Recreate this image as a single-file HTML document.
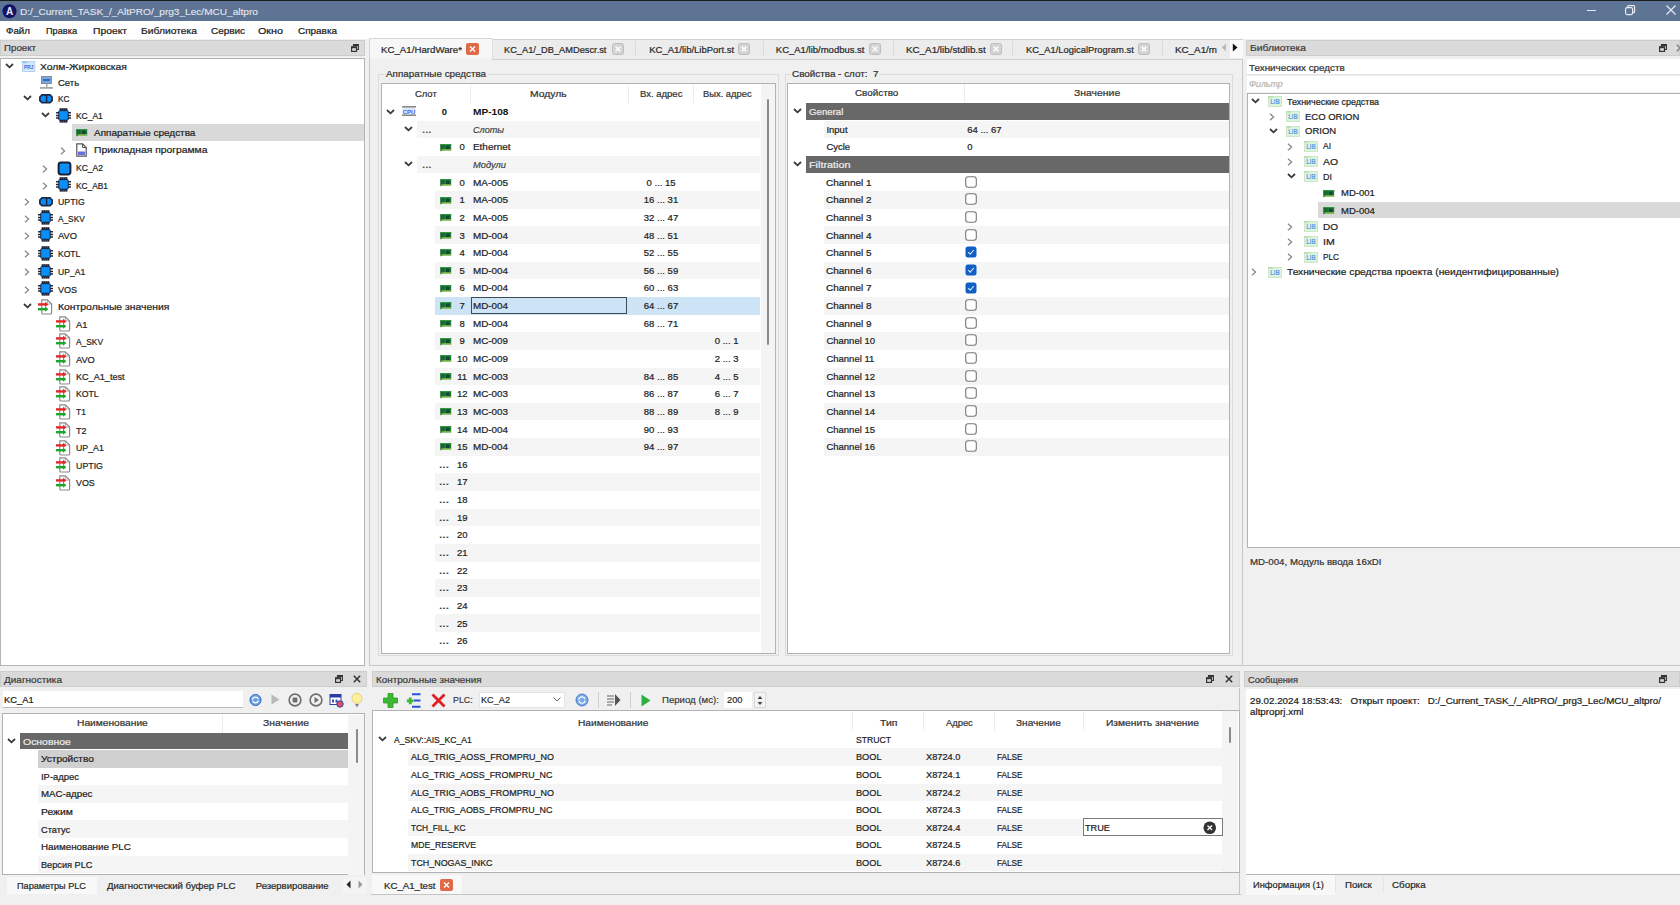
<!DOCTYPE html><html><head><meta charset="utf-8"><title>AltPRO</title><style>
*{margin:0;padding:0;box-sizing:border-box}
html,body{width:1680px;height:905px;overflow:hidden;background:#f0f0f0;font-family:"Liberation Sans",sans-serif;font-size:10px;color:#222}
div{position:absolute}
.t{white-space:pre;transform-origin:0 0}
svg{position:absolute;overflow:visible}
</style></head><body>
<div style="left:0;top:0;width:1680px;height:905px;overflow:hidden"><div style="left:0px;top:0px;width:1680px;height:1px;background:#1c1c1c"></div>
<div style="left:0px;top:1px;width:1680px;height:20.2px;background:#5e7495"></div>
<svg style="left:2px;top:4px" width="15" height="15"><circle cx="7.5" cy="7.3" r="7" fill="#12126a"/><text x="7.5" y="11.2" text-anchor="middle" font-family="Liberation Sans" font-weight="bold" font-size="10" fill="#e8e8f0">A</text></svg>
<div class="t" style="left:20.00px;top:7.05px;line-height:10.92px;font-size:9.5px;color:#e4e8ee;-webkit-text-stroke:0.1px #e4e8ee;transform:scaleX(1.061);">D:/_Current_TASK_/_AltPRO/_prg3_Lec/MCU_altpro</div>
<div style="left:1587px;top:10px;width:9px;height:1px;background:#e8ecf2"></div>
<svg style="left:1625px;top:5px" width="11" height="11"><rect x="0.6" y="2.6" width="7" height="7" rx="1.5" fill="none" stroke="#e8ecf2" stroke-width="1.2"/><path d="M2.6 2.6 V1.6 Q2.6 0.6 3.6 0.6 H8.6 Q9.6 0.6 9.6 1.6 V6.6 Q9.6 7.6 8.6 7.6 H7.6" fill="none" stroke="#e8ecf2" stroke-width="1.2"/></svg>
<svg style="left:1666px;top:5px" width="10" height="10"><path d="M0.5 0.5 L9.5 9.5 M9.5 0.5 L0.5 9.5" stroke="#e8ecf2" stroke-width="1.2"/></svg>
<div style="left:0px;top:21.2px;width:1680px;height:18px;background:#ffffff"></div>
<div class="t" style="left:6.00px;top:25.75px;line-height:10.92px;font-size:9.5px;color:#1a1a1a;-webkit-text-stroke:0.22px #1a1a1a;transform:scaleX(1.027);">Файл</div>
<div class="t" style="left:46.00px;top:25.75px;line-height:10.92px;font-size:9.5px;color:#1a1a1a;-webkit-text-stroke:0.22px #1a1a1a;transform:scaleX(0.966);">Правка</div>
<div class="t" style="left:93.00px;top:25.75px;line-height:10.92px;font-size:9.5px;color:#1a1a1a;-webkit-text-stroke:0.22px #1a1a1a;transform:scaleX(1.086);">Проект</div>
<div class="t" style="left:141.00px;top:25.75px;line-height:10.92px;font-size:9.5px;color:#1a1a1a;-webkit-text-stroke:0.22px #1a1a1a;transform:scaleX(1.084);">Библиотека</div>
<div class="t" style="left:211.00px;top:25.75px;line-height:10.92px;font-size:9.5px;color:#1a1a1a;-webkit-text-stroke:0.22px #1a1a1a;transform:scaleX(1.045);">Сервис</div>
<div class="t" style="left:258.00px;top:25.75px;line-height:10.92px;font-size:9.5px;color:#1a1a1a;-webkit-text-stroke:0.22px #1a1a1a;transform:scaleX(1.132);">Окно</div>
<div class="t" style="left:298.00px;top:25.75px;line-height:10.92px;font-size:9.5px;color:#1a1a1a;-webkit-text-stroke:0.22px #1a1a1a;transform:scaleX(1.046);">Справка</div>
<div style="left:0px;top:40px;width:365px;height:16px;background:#dadada;border:1px solid #cdcdcd"></div>
<div class="t" style="left:4.00px;top:43.05px;line-height:10.92px;font-size:9.5px;color:#3a3a3a;-webkit-text-stroke:0.22px #3a3a3a;transform:scaleX(1.022);">Проект</div>
<svg style="left:351px;top:44px" width="8" height="8"><path d="M2.5 2.5 V0.6 H7.4 V5.5 H5.5" fill="none" stroke="#333" stroke-width="1.1"/><path d="M2.5 1.3 H7.4" stroke="#333" stroke-width="1.4"/><rect x="0.6" y="2.8" width="4.9" height="4.6" fill="none" stroke="#333" stroke-width="1.2"/><path d="M0.6 3.5 H5.5" stroke="#333" stroke-width="1.4"/></svg>
<div style="left:0px;top:58px;width:365px;height:608px;background:#fff;border:1px solid #b4b4b4;border-top-color:#b2b2b2"></div>
<svg style="left:5px;top:62.900000000000006px" width="9" height="6" viewBox="0 0 9 6"><path d="M1 1 L4.5 4.3 L8 1" fill="none" stroke="#3a3a3a" stroke-width="1.8"/></svg>
<svg style="left:21.8px;top:60.900000000000006px" width="14" height="11" viewBox="0 0 14 11"><rect x="0.5" y="0.5" width="12.3" height="10" fill="#d4e8fa" stroke="#b4d4ee"/><rect x="0.5" y="0.5" width="4.5" height="1.4" fill="#90bde6"/><text x="6.7" y="8.2" text-anchor="middle" font-family="Liberation Sans" font-weight="bold" font-size="5.6" fill="#4a64d8" textLength="9.5" lengthAdjust="spacingAndGlyphs">PRJ</text></svg>
<div class="t" style="left:40.00px;top:61.65px;line-height:10.92px;font-size:9.5px;color:#1e1e1e;-webkit-text-stroke:0.22px #1e1e1e;transform:scaleX(1.088);">Холм-Жирковская</div>
<svg style="left:40px;top:75.5px" width="13" height="13" viewBox="0 0 13 13"><rect x="1.5" y="0.5" width="10" height="7" fill="#7aa6dc" stroke="#8090a0"/><rect x="3" y="3" width="7" height="2" fill="#3a6ab0"/><rect x="6" y="8" width="1.5" height="3" fill="#aaa"/><rect x="0" y="11" width="13" height="1.8" fill="#a8a8a8"/></svg>
<div class="t" style="left:58.00px;top:78.25px;line-height:10.92px;font-size:9.5px;color:#1e1e1e;-webkit-text-stroke:0.22px #1e1e1e;">Сеть</div>
<svg style="left:23px;top:95.0px" width="9" height="6" viewBox="0 0 9 6"><path d="M1 1 L4.5 4.3 L8 1" fill="none" stroke="#3a3a3a" stroke-width="1.8"/></svg>
<svg style="left:39.2px;top:93.9px" width="14" height="10" viewBox="0 0 14 10"><path d="M3 0.9 H11 L13.1 3 V6.6 L11 8.7 H3 L0.9 6.6 V3 Z" fill="#0c8cf6" stroke="#1b2a48" stroke-width="1.7"/><path d="M7.6 1 V8.6" stroke="#1b2a48" stroke-width="1.5"/></svg>
<div class="t" style="left:58.00px;top:93.75px;line-height:10.92px;font-size:9.5px;color:#1e1e1e;-webkit-text-stroke:0.22px #1e1e1e;transform:scaleX(0.871);">KC</div>
<svg style="left:41px;top:112.2px" width="9" height="6" viewBox="0 0 9 6"><path d="M1 1 L4.5 4.3 L8 1" fill="none" stroke="#3a3a3a" stroke-width="1.8"/></svg>
<svg style="left:56px;top:107.60000000000001px" width="15" height="15" viewBox="0 0 15 15"><rect x="2.8" y="2.6" width="9.4" height="9.6" rx="0.8" fill="#0a8ef8" stroke="#1a2a48" stroke-width="1"/><rect x="0" y="3.95" width="3" height="1.5" rx="0.5" fill="#1a2233"/><rect x="12" y="3.95" width="3" height="1.5" rx="0.5" fill="#1a2233"/><rect x="0" y="6.65" width="3" height="1.5" rx="0.5" fill="#1a2233"/><rect x="12" y="6.65" width="3" height="1.5" rx="0.5" fill="#1a2233"/><rect x="0" y="9.35" width="3" height="1.5" rx="0.5" fill="#1a2233"/><rect x="12" y="9.35" width="3" height="1.5" rx="0.5" fill="#1a2233"/><rect x="3.6" y="0.2" width="7.8" height="2.4" fill="#1a2233"/><rect x="3.6" y="12.2" width="7.8" height="2.4" fill="#1a2233"/><path d="M5.6 0.2 V1.8 M7.5 0.2 V1.8 M9.4 0.2 V1.8 M5.6 13 V14.6 M7.5 13 V14.6 M9.4 13 V14.6" stroke="#8090a8" stroke-width="0.45"/></svg>
<div class="t" style="left:76.00px;top:110.95px;line-height:10.92px;font-size:9.5px;color:#1e1e1e;-webkit-text-stroke:0.22px #1e1e1e;transform:scaleX(0.887);">KC_A1</div>
<div style="left:72px;top:124.1px;width:292px;height:16.6px;background:#d9d9d9"></div>
<svg style="left:76px;top:129.3px" width="12" height="8" viewBox="0 0 12 8"><path d="M0.3 0 H11.2 V6.4 H2 L0.3 7.4 Z" fill="#1f7f36"/><rect x="0.3" y="0" width="10.9" height="0.9" fill="#2e9a48"/><rect x="6" y="1.6" width="3.6" height="3.4" fill="#14463c"/><rect x="2.2" y="5.4" width="9" height="1" fill="#a8cc48"/><path d="M0.3 2 H4.6 M0.3 4 H4.6" stroke="#0f5424" stroke-width="0.9"/></svg>
<div class="t" style="left:94.00px;top:128.05px;line-height:10.92px;font-size:9.5px;color:#1e1e1e;-webkit-text-stroke:0.22px #1e1e1e;transform:scaleX(1.050);">Аппаратные средства</div>
<svg style="left:60px;top:146.7px" width="6" height="8" viewBox="0 0 6 8"><path d="M1 0.8 L4.6 4 L1 7.2" fill="none" stroke="#8a8a8a" stroke-width="1.3"/></svg>
<svg style="left:76px;top:143.0px" width="11" height="14" viewBox="0 0 11 14"><path d="M0.8 0.8 H6.5 L10.2 4.5 V13.2 H0.8 Z" fill="#fff" stroke="#555" stroke-width="1.2"/><path d="M6.5 0.8 V4.5 H10.2" fill="none" stroke="#555" stroke-width="1"/><rect x="2" y="8.5" width="7" height="3.5" fill="#6a70e0"/></svg>
<div class="t" style="left:94.00px;top:145.45px;line-height:10.92px;font-size:9.5px;color:#1e1e1e;-webkit-text-stroke:0.22px #1e1e1e;transform:scaleX(1.086);">Прикладная программа</div>
<svg style="left:42px;top:164.6px" width="6" height="8" viewBox="0 0 6 8"><path d="M1 0.8 L4.6 4 L1 7.2" fill="none" stroke="#8a8a8a" stroke-width="1.3"/></svg>
<svg style="left:56.5px;top:160.5px" width="15" height="15" viewBox="0 0 15 15"><rect x="1.6" y="1.6" width="11.8" height="11.8" rx="2.4" fill="#0a8ef8" stroke="#1a2233" stroke-width="2"/></svg>
<div class="t" style="left:76.00px;top:163.35px;line-height:10.92px;font-size:9.5px;color:#1e1e1e;-webkit-text-stroke:0.22px #1e1e1e;transform:scaleX(0.897);">KC_A2</div>
<svg style="left:42px;top:181.8px" width="6" height="8" viewBox="0 0 6 8"><path d="M1 0.8 L4.6 4 L1 7.2" fill="none" stroke="#8a8a8a" stroke-width="1.3"/></svg>
<svg style="left:56px;top:177.20000000000002px" width="15" height="15" viewBox="0 0 15 15"><rect x="2.8" y="2.6" width="9.4" height="9.6" rx="0.8" fill="#0a8ef8" stroke="#1a2a48" stroke-width="1"/><rect x="0" y="3.95" width="3" height="1.5" rx="0.5" fill="#1a2233"/><rect x="12" y="3.95" width="3" height="1.5" rx="0.5" fill="#1a2233"/><rect x="0" y="6.65" width="3" height="1.5" rx="0.5" fill="#1a2233"/><rect x="12" y="6.65" width="3" height="1.5" rx="0.5" fill="#1a2233"/><rect x="0" y="9.35" width="3" height="1.5" rx="0.5" fill="#1a2233"/><rect x="12" y="9.35" width="3" height="1.5" rx="0.5" fill="#1a2233"/><rect x="3.6" y="0.2" width="7.8" height="2.4" fill="#1a2233"/><rect x="3.6" y="12.2" width="7.8" height="2.4" fill="#1a2233"/><path d="M5.6 0.2 V1.8 M7.5 0.2 V1.8 M9.4 0.2 V1.8 M5.6 13 V14.6 M7.5 13 V14.6 M9.4 13 V14.6" stroke="#8090a8" stroke-width="0.45"/></svg>
<div class="t" style="left:76.00px;top:180.55px;line-height:10.92px;font-size:9.5px;color:#1e1e1e;-webkit-text-stroke:0.22px #1e1e1e;transform:scaleX(0.878);">KC_AB1</div>
<svg style="left:24px;top:197.8px" width="6" height="8" viewBox="0 0 6 8"><path d="M1 0.8 L4.6 4 L1 7.2" fill="none" stroke="#8a8a8a" stroke-width="1.3"/></svg>
<svg style="left:39.2px;top:196.70000000000002px" width="14" height="10" viewBox="0 0 14 10"><path d="M3 0.9 H11 L13.1 3 V6.6 L11 8.7 H3 L0.9 6.6 V3 Z" fill="#0c8cf6" stroke="#1b2a48" stroke-width="1.7"/><path d="M7.6 1 V8.6" stroke="#1b2a48" stroke-width="1.5"/></svg>
<div class="t" style="left:58.00px;top:196.55px;line-height:10.92px;font-size:9.5px;color:#1e1e1e;-webkit-text-stroke:0.22px #1e1e1e;transform:scaleX(0.920);">UPTIG</div>
<svg style="left:24px;top:214.9px" width="6" height="8" viewBox="0 0 6 8"><path d="M1 0.8 L4.6 4 L1 7.2" fill="none" stroke="#8a8a8a" stroke-width="1.3"/></svg>
<svg style="left:38px;top:210.3px" width="15" height="15" viewBox="0 0 15 15"><rect x="2.8" y="2.6" width="9.4" height="9.6" rx="0.8" fill="#0a8ef8" stroke="#1a2a48" stroke-width="1"/><rect x="0" y="3.95" width="3" height="1.5" rx="0.5" fill="#1a2233"/><rect x="12" y="3.95" width="3" height="1.5" rx="0.5" fill="#1a2233"/><rect x="0" y="6.65" width="3" height="1.5" rx="0.5" fill="#1a2233"/><rect x="12" y="6.65" width="3" height="1.5" rx="0.5" fill="#1a2233"/><rect x="0" y="9.35" width="3" height="1.5" rx="0.5" fill="#1a2233"/><rect x="12" y="9.35" width="3" height="1.5" rx="0.5" fill="#1a2233"/><rect x="3.6" y="0.2" width="7.8" height="2.4" fill="#1a2233"/><rect x="3.6" y="12.2" width="7.8" height="2.4" fill="#1a2233"/><path d="M5.6 0.2 V1.8 M7.5 0.2 V1.8 M9.4 0.2 V1.8 M5.6 13 V14.6 M7.5 13 V14.6 M9.4 13 V14.6" stroke="#8090a8" stroke-width="0.45"/></svg>
<div class="t" style="left:58.00px;top:213.65px;line-height:10.92px;font-size:9.5px;color:#1e1e1e;-webkit-text-stroke:0.22px #1e1e1e;transform:scaleX(0.871);">A_SKV</div>
<svg style="left:24px;top:232.0px" width="6" height="8" viewBox="0 0 6 8"><path d="M1 0.8 L4.6 4 L1 7.2" fill="none" stroke="#8a8a8a" stroke-width="1.3"/></svg>
<svg style="left:38px;top:227.4px" width="15" height="15" viewBox="0 0 15 15"><rect x="2.8" y="2.6" width="9.4" height="9.6" rx="0.8" fill="#0a8ef8" stroke="#1a2a48" stroke-width="1"/><rect x="0" y="3.95" width="3" height="1.5" rx="0.5" fill="#1a2233"/><rect x="12" y="3.95" width="3" height="1.5" rx="0.5" fill="#1a2233"/><rect x="0" y="6.65" width="3" height="1.5" rx="0.5" fill="#1a2233"/><rect x="12" y="6.65" width="3" height="1.5" rx="0.5" fill="#1a2233"/><rect x="0" y="9.35" width="3" height="1.5" rx="0.5" fill="#1a2233"/><rect x="12" y="9.35" width="3" height="1.5" rx="0.5" fill="#1a2233"/><rect x="3.6" y="0.2" width="7.8" height="2.4" fill="#1a2233"/><rect x="3.6" y="12.2" width="7.8" height="2.4" fill="#1a2233"/><path d="M5.6 0.2 V1.8 M7.5 0.2 V1.8 M9.4 0.2 V1.8 M5.6 13 V14.6 M7.5 13 V14.6 M9.4 13 V14.6" stroke="#8090a8" stroke-width="0.45"/></svg>
<div class="t" style="left:58.00px;top:230.75px;line-height:10.92px;font-size:9.5px;color:#1e1e1e;-webkit-text-stroke:0.22px #1e1e1e;transform:scaleX(0.981);">AVO</div>
<svg style="left:24px;top:250.39999999999998px" width="6" height="8" viewBox="0 0 6 8"><path d="M1 0.8 L4.6 4 L1 7.2" fill="none" stroke="#8a8a8a" stroke-width="1.3"/></svg>
<svg style="left:38px;top:245.79999999999998px" width="15" height="15" viewBox="0 0 15 15"><rect x="2.8" y="2.6" width="9.4" height="9.6" rx="0.8" fill="#0a8ef8" stroke="#1a2a48" stroke-width="1"/><rect x="0" y="3.95" width="3" height="1.5" rx="0.5" fill="#1a2233"/><rect x="12" y="3.95" width="3" height="1.5" rx="0.5" fill="#1a2233"/><rect x="0" y="6.65" width="3" height="1.5" rx="0.5" fill="#1a2233"/><rect x="12" y="6.65" width="3" height="1.5" rx="0.5" fill="#1a2233"/><rect x="0" y="9.35" width="3" height="1.5" rx="0.5" fill="#1a2233"/><rect x="12" y="9.35" width="3" height="1.5" rx="0.5" fill="#1a2233"/><rect x="3.6" y="0.2" width="7.8" height="2.4" fill="#1a2233"/><rect x="3.6" y="12.2" width="7.8" height="2.4" fill="#1a2233"/><path d="M5.6 0.2 V1.8 M7.5 0.2 V1.8 M9.4 0.2 V1.8 M5.6 13 V14.6 M7.5 13 V14.6 M9.4 13 V14.6" stroke="#8090a8" stroke-width="0.45"/></svg>
<div class="t" style="left:58.00px;top:249.15px;line-height:10.92px;font-size:9.5px;color:#1e1e1e;-webkit-text-stroke:0.22px #1e1e1e;transform:scaleX(0.899);">KOTL</div>
<svg style="left:24px;top:268.3px" width="6" height="8" viewBox="0 0 6 8"><path d="M1 0.8 L4.6 4 L1 7.2" fill="none" stroke="#8a8a8a" stroke-width="1.3"/></svg>
<svg style="left:38px;top:263.7px" width="15" height="15" viewBox="0 0 15 15"><rect x="2.8" y="2.6" width="9.4" height="9.6" rx="0.8" fill="#0a8ef8" stroke="#1a2a48" stroke-width="1"/><rect x="0" y="3.95" width="3" height="1.5" rx="0.5" fill="#1a2233"/><rect x="12" y="3.95" width="3" height="1.5" rx="0.5" fill="#1a2233"/><rect x="0" y="6.65" width="3" height="1.5" rx="0.5" fill="#1a2233"/><rect x="12" y="6.65" width="3" height="1.5" rx="0.5" fill="#1a2233"/><rect x="0" y="9.35" width="3" height="1.5" rx="0.5" fill="#1a2233"/><rect x="12" y="9.35" width="3" height="1.5" rx="0.5" fill="#1a2233"/><rect x="3.6" y="0.2" width="7.8" height="2.4" fill="#1a2233"/><rect x="3.6" y="12.2" width="7.8" height="2.4" fill="#1a2233"/><path d="M5.6 0.2 V1.8 M7.5 0.2 V1.8 M9.4 0.2 V1.8 M5.6 13 V14.6 M7.5 13 V14.6 M9.4 13 V14.6" stroke="#8090a8" stroke-width="0.45"/></svg>
<div class="t" style="left:58.00px;top:267.05px;line-height:10.92px;font-size:9.5px;color:#1e1e1e;-webkit-text-stroke:0.22px #1e1e1e;transform:scaleX(0.907);">UP_A1</div>
<svg style="left:24px;top:285.9px" width="6" height="8" viewBox="0 0 6 8"><path d="M1 0.8 L4.6 4 L1 7.2" fill="none" stroke="#8a8a8a" stroke-width="1.3"/></svg>
<svg style="left:38px;top:281.29999999999995px" width="15" height="15" viewBox="0 0 15 15"><rect x="2.8" y="2.6" width="9.4" height="9.6" rx="0.8" fill="#0a8ef8" stroke="#1a2a48" stroke-width="1"/><rect x="0" y="3.95" width="3" height="1.5" rx="0.5" fill="#1a2233"/><rect x="12" y="3.95" width="3" height="1.5" rx="0.5" fill="#1a2233"/><rect x="0" y="6.65" width="3" height="1.5" rx="0.5" fill="#1a2233"/><rect x="12" y="6.65" width="3" height="1.5" rx="0.5" fill="#1a2233"/><rect x="0" y="9.35" width="3" height="1.5" rx="0.5" fill="#1a2233"/><rect x="12" y="9.35" width="3" height="1.5" rx="0.5" fill="#1a2233"/><rect x="3.6" y="0.2" width="7.8" height="2.4" fill="#1a2233"/><rect x="3.6" y="12.2" width="7.8" height="2.4" fill="#1a2233"/><path d="M5.6 0.2 V1.8 M7.5 0.2 V1.8 M9.4 0.2 V1.8 M5.6 13 V14.6 M7.5 13 V14.6 M9.4 13 V14.6" stroke="#8090a8" stroke-width="0.45"/></svg>
<div class="t" style="left:58.00px;top:284.65px;line-height:10.92px;font-size:9.5px;color:#1e1e1e;-webkit-text-stroke:0.22px #1e1e1e;transform:scaleX(0.947);">VOS</div>
<svg style="left:23px;top:303.2px" width="9" height="6" viewBox="0 0 9 6"><path d="M1 1 L4.5 4.3 L8 1" fill="none" stroke="#3a3a3a" stroke-width="1.8"/></svg>
<svg style="left:38px;top:298.5px" width="15" height="16" viewBox="0 0 15 16"><path d="M3.8 0.8 H9.3 L13.6 5 V13.7 Q13.6 15 12.3 15 H5 Q3.8 15 3.8 13.7 Z" fill="#fff" stroke="#8a8a8a" stroke-width="1.2"/><path d="M9.3 0.8 V5 H13.6" fill="none" stroke="#9a9a9a" stroke-width="0.9"/><path d="M0 5.4 H7.5" stroke="#e42828" stroke-width="2.4"/><path d="M7 2.8 L10.4 5.4 L7 8 Z" fill="#e42828"/><path d="M0 10.2 H7.5" stroke="#1aa82a" stroke-width="2.4"/><path d="M7 7.6 L10.4 10.2 L7 12.8 Z" fill="#1aa82a"/></svg>
<div class="t" style="left:58.00px;top:301.95px;line-height:10.92px;font-size:9.5px;color:#1e1e1e;-webkit-text-stroke:0.22px #1e1e1e;transform:scaleX(1.094);">Контрольные значения</div>
<svg style="left:56px;top:316.40000000000003px" width="15" height="16" viewBox="0 0 15 16"><path d="M3.8 0.8 H9.3 L13.6 5 V13.7 Q13.6 15 12.3 15 H5 Q3.8 15 3.8 13.7 Z" fill="#fff" stroke="#8a8a8a" stroke-width="1.2"/><path d="M9.3 0.8 V5 H13.6" fill="none" stroke="#9a9a9a" stroke-width="0.9"/><path d="M0 5.4 H7.5" stroke="#e42828" stroke-width="2.4"/><path d="M7 2.8 L10.4 5.4 L7 8 Z" fill="#e42828"/><path d="M0 10.2 H7.5" stroke="#1aa82a" stroke-width="2.4"/><path d="M7 7.6 L10.4 10.2 L7 12.8 Z" fill="#1aa82a"/></svg>
<div class="t" style="left:76.00px;top:319.85px;line-height:10.92px;font-size:9.5px;color:#1e1e1e;-webkit-text-stroke:0.22px #1e1e1e;transform:scaleX(0.981);">A1</div>
<svg style="left:56px;top:333.3px" width="15" height="16" viewBox="0 0 15 16"><path d="M3.8 0.8 H9.3 L13.6 5 V13.7 Q13.6 15 12.3 15 H5 Q3.8 15 3.8 13.7 Z" fill="#fff" stroke="#8a8a8a" stroke-width="1.2"/><path d="M9.3 0.8 V5 H13.6" fill="none" stroke="#9a9a9a" stroke-width="0.9"/><path d="M0 5.4 H7.5" stroke="#e42828" stroke-width="2.4"/><path d="M7 2.8 L10.4 5.4 L7 8 Z" fill="#e42828"/><path d="M0 10.2 H7.5" stroke="#1aa82a" stroke-width="2.4"/><path d="M7 7.6 L10.4 10.2 L7 12.8 Z" fill="#1aa82a"/></svg>
<div class="t" style="left:76.00px;top:336.75px;line-height:10.92px;font-size:9.5px;color:#1e1e1e;-webkit-text-stroke:0.22px #1e1e1e;transform:scaleX(0.881);">A_SKV</div>
<svg style="left:56px;top:351.2px" width="15" height="16" viewBox="0 0 15 16"><path d="M3.8 0.8 H9.3 L13.6 5 V13.7 Q13.6 15 12.3 15 H5 Q3.8 15 3.8 13.7 Z" fill="#fff" stroke="#8a8a8a" stroke-width="1.2"/><path d="M9.3 0.8 V5 H13.6" fill="none" stroke="#9a9a9a" stroke-width="0.9"/><path d="M0 5.4 H7.5" stroke="#e42828" stroke-width="2.4"/><path d="M7 2.8 L10.4 5.4 L7 8 Z" fill="#e42828"/><path d="M0 10.2 H7.5" stroke="#1aa82a" stroke-width="2.4"/><path d="M7 7.6 L10.4 10.2 L7 12.8 Z" fill="#1aa82a"/></svg>
<div class="t" style="left:76.00px;top:354.65px;line-height:10.92px;font-size:9.5px;color:#1e1e1e;-webkit-text-stroke:0.22px #1e1e1e;transform:scaleX(0.971);">AVO</div>
<svg style="left:56px;top:368.7px" width="15" height="16" viewBox="0 0 15 16"><path d="M3.8 0.8 H9.3 L13.6 5 V13.7 Q13.6 15 12.3 15 H5 Q3.8 15 3.8 13.7 Z" fill="#fff" stroke="#8a8a8a" stroke-width="1.2"/><path d="M9.3 0.8 V5 H13.6" fill="none" stroke="#9a9a9a" stroke-width="0.9"/><path d="M0 5.4 H7.5" stroke="#e42828" stroke-width="2.4"/><path d="M7 2.8 L10.4 5.4 L7 8 Z" fill="#e42828"/><path d="M0 10.2 H7.5" stroke="#1aa82a" stroke-width="2.4"/><path d="M7 7.6 L10.4 10.2 L7 12.8 Z" fill="#1aa82a"/></svg>
<div class="t" style="left:76.00px;top:372.15px;line-height:10.92px;font-size:9.5px;color:#1e1e1e;-webkit-text-stroke:0.22px #1e1e1e;transform:scaleX(0.959);">KC_A1_test</div>
<svg style="left:56px;top:386.0px" width="15" height="16" viewBox="0 0 15 16"><path d="M3.8 0.8 H9.3 L13.6 5 V13.7 Q13.6 15 12.3 15 H5 Q3.8 15 3.8 13.7 Z" fill="#fff" stroke="#8a8a8a" stroke-width="1.2"/><path d="M9.3 0.8 V5 H13.6" fill="none" stroke="#9a9a9a" stroke-width="0.9"/><path d="M0 5.4 H7.5" stroke="#e42828" stroke-width="2.4"/><path d="M7 2.8 L10.4 5.4 L7 8 Z" fill="#e42828"/><path d="M0 10.2 H7.5" stroke="#1aa82a" stroke-width="2.4"/><path d="M7 7.6 L10.4 10.2 L7 12.8 Z" fill="#1aa82a"/></svg>
<div class="t" style="left:76.00px;top:389.45px;line-height:10.92px;font-size:9.5px;color:#1e1e1e;-webkit-text-stroke:0.22px #1e1e1e;transform:scaleX(0.911);">KOTL</div>
<svg style="left:56px;top:403.90000000000003px" width="15" height="16" viewBox="0 0 15 16"><path d="M3.8 0.8 H9.3 L13.6 5 V13.7 Q13.6 15 12.3 15 H5 Q3.8 15 3.8 13.7 Z" fill="#fff" stroke="#8a8a8a" stroke-width="1.2"/><path d="M9.3 0.8 V5 H13.6" fill="none" stroke="#9a9a9a" stroke-width="0.9"/><path d="M0 5.4 H7.5" stroke="#e42828" stroke-width="2.4"/><path d="M7 2.8 L10.4 5.4 L7 8 Z" fill="#e42828"/><path d="M0 10.2 H7.5" stroke="#1aa82a" stroke-width="2.4"/><path d="M7 7.6 L10.4 10.2 L7 12.8 Z" fill="#1aa82a"/></svg>
<div class="t" style="left:76.00px;top:407.35px;line-height:10.92px;font-size:9.5px;color:#1e1e1e;-webkit-text-stroke:0.22px #1e1e1e;transform:scaleX(0.892);">T1</div>
<svg style="left:56px;top:422.40000000000003px" width="15" height="16" viewBox="0 0 15 16"><path d="M3.8 0.8 H9.3 L13.6 5 V13.7 Q13.6 15 12.3 15 H5 Q3.8 15 3.8 13.7 Z" fill="#fff" stroke="#8a8a8a" stroke-width="1.2"/><path d="M9.3 0.8 V5 H13.6" fill="none" stroke="#9a9a9a" stroke-width="0.9"/><path d="M0 5.4 H7.5" stroke="#e42828" stroke-width="2.4"/><path d="M7 2.8 L10.4 5.4 L7 8 Z" fill="#e42828"/><path d="M0 10.2 H7.5" stroke="#1aa82a" stroke-width="2.4"/><path d="M7 7.6 L10.4 10.2 L7 12.8 Z" fill="#1aa82a"/></svg>
<div class="t" style="left:76.00px;top:425.85px;line-height:10.92px;font-size:9.5px;color:#1e1e1e;-webkit-text-stroke:0.22px #1e1e1e;transform:scaleX(0.946);">T2</div>
<svg style="left:56px;top:439.6px" width="15" height="16" viewBox="0 0 15 16"><path d="M3.8 0.8 H9.3 L13.6 5 V13.7 Q13.6 15 12.3 15 H5 Q3.8 15 3.8 13.7 Z" fill="#fff" stroke="#8a8a8a" stroke-width="1.2"/><path d="M9.3 0.8 V5 H13.6" fill="none" stroke="#9a9a9a" stroke-width="0.9"/><path d="M0 5.4 H7.5" stroke="#e42828" stroke-width="2.4"/><path d="M7 2.8 L10.4 5.4 L7 8 Z" fill="#e42828"/><path d="M0 10.2 H7.5" stroke="#1aa82a" stroke-width="2.4"/><path d="M7 7.6 L10.4 10.2 L7 12.8 Z" fill="#1aa82a"/></svg>
<div class="t" style="left:76.00px;top:443.05px;line-height:10.92px;font-size:9.5px;color:#1e1e1e;-webkit-text-stroke:0.22px #1e1e1e;transform:scaleX(0.923);">UP_A1</div>
<svg style="left:56px;top:457.3px" width="15" height="16" viewBox="0 0 15 16"><path d="M3.8 0.8 H9.3 L13.6 5 V13.7 Q13.6 15 12.3 15 H5 Q3.8 15 3.8 13.7 Z" fill="#fff" stroke="#8a8a8a" stroke-width="1.2"/><path d="M9.3 0.8 V5 H13.6" fill="none" stroke="#9a9a9a" stroke-width="0.9"/><path d="M0 5.4 H7.5" stroke="#e42828" stroke-width="2.4"/><path d="M7 2.8 L10.4 5.4 L7 8 Z" fill="#e42828"/><path d="M0 10.2 H7.5" stroke="#1aa82a" stroke-width="2.4"/><path d="M7 7.6 L10.4 10.2 L7 12.8 Z" fill="#1aa82a"/></svg>
<div class="t" style="left:76.00px;top:460.75px;line-height:10.92px;font-size:9.5px;color:#1e1e1e;-webkit-text-stroke:0.22px #1e1e1e;transform:scaleX(0.930);">UPTIG</div>
<svg style="left:56px;top:474.5px" width="15" height="16" viewBox="0 0 15 16"><path d="M3.8 0.8 H9.3 L13.6 5 V13.7 Q13.6 15 12.3 15 H5 Q3.8 15 3.8 13.7 Z" fill="#fff" stroke="#8a8a8a" stroke-width="1.2"/><path d="M9.3 0.8 V5 H13.6" fill="none" stroke="#9a9a9a" stroke-width="0.9"/><path d="M0 5.4 H7.5" stroke="#e42828" stroke-width="2.4"/><path d="M7 2.8 L10.4 5.4 L7 8 Z" fill="#e42828"/><path d="M0 10.2 H7.5" stroke="#1aa82a" stroke-width="2.4"/><path d="M7 7.6 L10.4 10.2 L7 12.8 Z" fill="#1aa82a"/></svg>
<div class="t" style="left:76.00px;top:477.95px;line-height:10.92px;font-size:9.5px;color:#1e1e1e;-webkit-text-stroke:0.22px #1e1e1e;transform:scaleX(0.937);">VOS</div>
<div style="left:369px;top:38.5px;width:874px;height:20px;background:#ececec;border-top:1px solid #cfcfcf"></div>
<div style="left:368.75px;top:38px;width:123.75px;height:21px;background:#f7f7f7;border-top:1px solid #d6d6d6;border-left:1px solid #d6d6d6;border-right:1px solid #e0e0e0"></div>
<div class="t" style="left:381.25px;top:45.45px;line-height:10.92px;font-size:9.5px;color:#2a2a2a;-webkit-text-stroke:0.22px #2a2a2a;transform:scaleX(1.020);">KC_A1/HardWare*</div>
<svg style="left:466.25px;top:42.7px" width="13" height="12" viewBox="0 0 13 12"><rect x="0" y="0" width="13" height="12" rx="2" fill="#e06a48"/><path d="M4 3.5 L9 8.5 M9 3.5 L4 8.5" stroke="#fff" stroke-width="1.4"/></svg>
<div class="t" style="left:504.20px;top:45.45px;line-height:10.92px;font-size:9.5px;color:#2a2a2a;-webkit-text-stroke:0.22px #2a2a2a;transform:scaleX(0.975);">KC_A1/_DB_AMDescr.st</div>
<svg style="left:611.7px;top:42.5px" width="12" height="12" viewBox="0 0 12 12"><rect x="0.5" y="0.5" width="11" height="11" rx="2" fill="#d4d4d4" stroke="#bdbdbd"/><path d="M3.6 3.6 L8.4 8.4 M8.4 3.6 L3.6 8.4" stroke="#fafafa" stroke-width="1.5"/></svg>
<div style="left:635px;top:41px;width:1px;height:15px;background:#dadada"></div>
<div class="t" style="left:649.20px;top:45.45px;line-height:10.92px;font-size:9.5px;color:#2a2a2a;-webkit-text-stroke:0.22px #2a2a2a;">KC_A1/lib/LibPort.st</div>
<svg style="left:738.3px;top:42.5px" width="12" height="12" viewBox="0 0 12 12"><rect x="0.5" y="0.5" width="11" height="11" rx="2" fill="#d4d4d4" stroke="#bdbdbd"/><path d="M3.6 3.6 L8.4 8.4 M8.4 3.6 L3.6 8.4" stroke="#fafafa" stroke-width="1.5"/></svg>
<div style="left:762.5px;top:41px;width:1px;height:15px;background:#dadada"></div>
<div class="t" style="left:775.80px;top:45.45px;line-height:10.92px;font-size:9.5px;color:#2a2a2a;-webkit-text-stroke:0.22px #2a2a2a;">KC_A1/lib/modbus.st</div>
<svg style="left:869.2px;top:42.5px" width="12" height="12" viewBox="0 0 12 12"><rect x="0.5" y="0.5" width="11" height="11" rx="2" fill="#d4d4d4" stroke="#bdbdbd"/><path d="M3.6 3.6 L8.4 8.4 M8.4 3.6 L3.6 8.4" stroke="#fafafa" stroke-width="1.5"/></svg>
<div style="left:893.3px;top:41px;width:1px;height:15px;background:#dadada"></div>
<div class="t" style="left:905.90px;top:45.45px;line-height:10.92px;font-size:9.5px;color:#2a2a2a;-webkit-text-stroke:0.22px #2a2a2a;transform:scaleX(1.034);">KC_A1/lib/stdlib.st</div>
<svg style="left:989.8px;top:42.5px" width="12" height="12" viewBox="0 0 12 12"><rect x="0.5" y="0.5" width="11" height="11" rx="2" fill="#d4d4d4" stroke="#bdbdbd"/><path d="M3.6 3.6 L8.4 8.4 M8.4 3.6 L3.6 8.4" stroke="#fafafa" stroke-width="1.5"/></svg>
<div style="left:1012.2px;top:41px;width:1px;height:15px;background:#dadada"></div>
<div class="t" style="left:1026.20px;top:45.45px;line-height:10.92px;font-size:9.5px;color:#2a2a2a;-webkit-text-stroke:0.22px #2a2a2a;transform:scaleX(0.986);">KC_A1/LogicalProgram.st</div>
<svg style="left:1138px;top:42.5px" width="12" height="12" viewBox="0 0 12 12"><rect x="0.5" y="0.5" width="11" height="11" rx="2" fill="#d4d4d4" stroke="#bdbdbd"/><path d="M3.6 3.6 L8.4 8.4 M8.4 3.6 L3.6 8.4" stroke="#fafafa" stroke-width="1.5"/></svg>
<div style="left:1162px;top:41px;width:1px;height:15px;background:#dadada"></div>
<div class="t" style="left:1174.50px;top:45.45px;line-height:10.92px;font-size:9.5px;color:#2a2a2a;-webkit-text-stroke:0.22px #2a2a2a;transform:scaleX(1.033);overflow:hidden;">KC_A1/m</div>
<div style="left:1217px;top:39.5px;width:25.5px;height:19px;background:#ececec"></div>
<svg style="left:1221px;top:43px" width="6" height="9" viewBox="0 0 6 9"><path d="M5 0.5 L0.8 4.5 L5 8.5 Z" fill="#b8b8b8"/></svg>
<div style="left:1230px;top:39.5px;width:13px;height:18px;background:#fafafa"></div>
<svg style="left:1232px;top:43px" width="6" height="9" viewBox="0 0 6 9"><path d="M0.8 0.5 L5.5 4.5 L0.8 8.5 Z" fill="#111"/></svg>
<div style="left:369px;top:58.5px;width:873.5px;height:607px;background:#f0f0f0;border:1px solid #c8c8c8;border-top-color:#d0d0d0"></div>
<div style="left:369.8px;top:58px;width:122px;height:1.6px;background:#f3f3f3"></div>
<div style="left:377.5px;top:73.5px;width:401px;height:582.5px;border:1px solid #dcdcdc"></div>
<div style="left:784.6px;top:73.5px;width:448px;height:582.5px;border:1px solid #dcdcdc"></div>
<div class="t" style="left:385.00px;top:69.05px;line-height:10.92px;font-size:9.5px;color:#333;-webkit-text-stroke:0.22px #333;transform:scaleX(1.035);background:#f0f0f0;padding:0 1px;">Аппаратные средства</div>
<div class="t" style="left:791.10px;top:69.05px;line-height:10.92px;font-size:9.5px;color:#333;-webkit-text-stroke:0.22px #333;transform:scaleX(1.039);background:#f0f0f0;padding:0 1px;">Свойства - слот:  7</div>
<div style="left:380.7px;top:83.3px;width:395.3px;height:570.5px;background:#fff;border:1px solid #b2b2b2"></div>
<div style="left:469.5px;top:84.5px;width:1px;height:18px;background:#ececec"></div>
<div style="left:627.7px;top:84.5px;width:1px;height:18px;background:#ececec"></div>
<div style="left:692.8px;top:84.5px;width:1px;height:18px;background:#ececec"></div>
<div class="t" style="left:414.70px;top:88.55px;line-height:10.92px;font-size:9.5px;color:#333;-webkit-text-stroke:0.22px #333;transform:scaleX(0.989);">Слот</div>
<div class="t" style="left:530.20px;top:88.55px;line-height:10.92px;font-size:9.5px;color:#333;-webkit-text-stroke:0.22px #333;transform:scaleX(1.092);">Модуль</div>
<div class="t" style="left:640.00px;top:88.55px;line-height:10.92px;font-size:9.5px;color:#333;-webkit-text-stroke:0.22px #333;">Вх. адрес</div>
<div class="t" style="left:703.00px;top:88.55px;line-height:10.92px;font-size:9.5px;color:#333;-webkit-text-stroke:0.22px #333;transform:scaleX(0.985);">Вых. адрес</div>
<div style="left:760.5px;top:84.3px;width:14.5px;height:568.5px;background:#f4f4f4"></div>
<div style="left:767.2px;top:99.2px;width:2.2px;height:246px;background:#8a8a8a;border-radius:1px"></div>
<div style="left:417.3px;top:120.54px;width:342.7px;height:17.64px;background:#f5f5f5"></div>
<div style="left:417.3px;top:155.82px;width:342.7px;height:17.64px;background:#f5f5f5"></div>
<div style="left:435px;top:191.10000000000002px;width:325px;height:17.64px;background:#f5f5f5"></div>
<div style="left:435px;top:226.38px;width:325px;height:17.64px;background:#f5f5f5"></div>
<div style="left:435px;top:261.65999999999997px;width:325px;height:17.64px;background:#f5f5f5"></div>
<div style="left:435px;top:296.94000000000005px;width:325px;height:17.64px;background:#f5f5f5"></div>
<div style="left:435px;top:332.22px;width:325px;height:17.64px;background:#f5f5f5"></div>
<div style="left:435px;top:367.5px;width:325px;height:17.64px;background:#f5f5f5"></div>
<div style="left:435px;top:402.78px;width:325px;height:17.64px;background:#f5f5f5"></div>
<div style="left:435px;top:438.06000000000006px;width:325px;height:17.64px;background:#f5f5f5"></div>
<div style="left:435px;top:473.34000000000003px;width:325px;height:17.64px;background:#f5f5f5"></div>
<div style="left:435px;top:508.62px;width:325px;height:17.64px;background:#f5f5f5"></div>
<div style="left:435px;top:543.9px;width:325px;height:17.64px;background:#f5f5f5"></div>
<div style="left:435px;top:579.1800000000001px;width:325px;height:17.64px;background:#f5f5f5"></div>
<div style="left:435px;top:614.46px;width:325px;height:17.64px;background:#f5f5f5"></div>
<div style="left:435px;top:296.94000000000005px;width:325px;height:17.64px;background:#cde4f7"></div>
<div style="left:470.8px;top:297.24000000000007px;width:156px;height:17.04px;border:1px solid #3c4a5a"></div>
<svg style="left:386.4px;top:108.60000000000001px" width="9" height="6" viewBox="0 0 9 6"><path d="M1 1 L4.5 4.3 L8 1" fill="none" stroke="#3a3a3a" stroke-width="1.8"/></svg>
<svg style="left:402px;top:106.30000000000001px" width="14" height="10" viewBox="0 0 14 10"><rect x="0" y="0" width="14" height="1.6" fill="#888"/><rect x="0" y="8.4" width="14" height="1.6" fill="#888"/><rect x="0.5" y="2" width="13" height="6" fill="#dde6ff"/><text x="7" y="7.6" text-anchor="middle" font-family="Liberation Sans" font-weight="bold" font-size="6.2" fill="#4b5ef0" textLength="12.5" lengthAdjust="spacingAndGlyphs">CPU</text></svg>
<div class="t" style="left:441.70px;top:107.05px;line-height:10.92px;font-size:9.5px;color:#111;font-weight:bold;">0</div>
<div class="t" style="left:473.00px;top:107.05px;line-height:10.92px;font-size:9.5px;color:#111;font-weight:bold;transform:scaleX(1.067);">MP-108</div>
<svg style="left:403.6px;top:125.84px" width="9" height="6" viewBox="0 0 9 6"><path d="M1 1 L4.5 4.3 L8 1" fill="none" stroke="#3a3a3a" stroke-width="1.8"/></svg>
<div class="t" style="left:422.20px;top:124.69px;line-height:10.92px;font-size:9.5px;color:#555;font-weight:bold;transform:scaleX(1.199);">...</div>
<div class="t" style="left:473.00px;top:124.69px;line-height:10.92px;font-size:9.5px;color:#444;font-style:italic;-webkit-text-stroke:0.22px #444;transform:scaleX(0.957);">Слоты</div>
<svg style="left:439.5px;top:143.58px" width="12" height="8" viewBox="0 0 12 8"><path d="M0.3 0 H11.2 V6.4 H2 L0.3 7.4 Z" fill="#1f7f36"/><rect x="0.3" y="0" width="10.9" height="0.9" fill="#2e9a48"/><rect x="6" y="1.6" width="3.6" height="3.4" fill="#14463c"/><rect x="2.2" y="5.4" width="9" height="1" fill="#a8cc48"/><path d="M0.3 2 H4.6 M0.3 4 H4.6" stroke="#0f5424" stroke-width="0.9"/></svg>
<div class="t" style="left:459.55px;top:142.33px;line-height:10.92px;font-size:9.5px;color:#222;-webkit-text-stroke:0.22px #222;">0</div>
<div class="t" style="left:473.00px;top:142.33px;line-height:10.92px;font-size:9.5px;color:#222;-webkit-text-stroke:0.22px #222;transform:scaleX(1.044);">Ethernet</div>
<svg style="left:403.6px;top:161.12px" width="9" height="6" viewBox="0 0 9 6"><path d="M1 1 L4.5 4.3 L8 1" fill="none" stroke="#3a3a3a" stroke-width="1.8"/></svg>
<div class="t" style="left:422.20px;top:159.97px;line-height:10.92px;font-size:9.5px;color:#555;font-weight:bold;transform:scaleX(1.199);">...</div>
<div class="t" style="left:473.00px;top:159.97px;line-height:10.92px;font-size:9.5px;color:#444;font-style:italic;-webkit-text-stroke:0.22px #444;transform:scaleX(0.981);">Модули</div>
<svg style="left:439.5px;top:178.86px" width="12" height="8" viewBox="0 0 12 8"><path d="M0.3 0 H11.2 V6.4 H2 L0.3 7.4 Z" fill="#1f7f36"/><rect x="0.3" y="0" width="10.9" height="0.9" fill="#2e9a48"/><rect x="6" y="1.6" width="3.6" height="3.4" fill="#14463c"/><rect x="2.2" y="5.4" width="9" height="1" fill="#a8cc48"/><path d="M0.3 2 H4.6 M0.3 4 H4.6" stroke="#0f5424" stroke-width="0.9"/></svg>
<div class="t" style="left:459.55px;top:177.61px;line-height:10.92px;font-size:9.5px;color:#222;-webkit-text-stroke:0.22px #222;">0</div>
<div class="t" style="left:473.00px;top:177.61px;line-height:10.92px;font-size:9.5px;color:#222;-webkit-text-stroke:0.22px #222;transform:scaleX(1.052);">MA-005</div>
<div class="t" style="left:646.47px;top:177.61px;line-height:10.92px;font-size:9.5px;color:#222;-webkit-text-stroke:0.22px #222;">0 ... 15</div>
<svg style="left:439.5px;top:196.50000000000003px" width="12" height="8" viewBox="0 0 12 8"><path d="M0.3 0 H11.2 V6.4 H2 L0.3 7.4 Z" fill="#1f7f36"/><rect x="0.3" y="0" width="10.9" height="0.9" fill="#2e9a48"/><rect x="6" y="1.6" width="3.6" height="3.4" fill="#14463c"/><rect x="2.2" y="5.4" width="9" height="1" fill="#a8cc48"/><path d="M0.3 2 H4.6 M0.3 4 H4.6" stroke="#0f5424" stroke-width="0.9"/></svg>
<div class="t" style="left:459.55px;top:195.25px;line-height:10.92px;font-size:9.5px;color:#222;-webkit-text-stroke:0.22px #222;">1</div>
<div class="t" style="left:473.00px;top:195.25px;line-height:10.92px;font-size:9.5px;color:#222;-webkit-text-stroke:0.22px #222;transform:scaleX(1.052);">MA-005</div>
<div class="t" style="left:643.83px;top:195.25px;line-height:10.92px;font-size:9.5px;color:#222;-webkit-text-stroke:0.22px #222;">16 ... 31</div>
<svg style="left:439.5px;top:214.14000000000001px" width="12" height="8" viewBox="0 0 12 8"><path d="M0.3 0 H11.2 V6.4 H2 L0.3 7.4 Z" fill="#1f7f36"/><rect x="0.3" y="0" width="10.9" height="0.9" fill="#2e9a48"/><rect x="6" y="1.6" width="3.6" height="3.4" fill="#14463c"/><rect x="2.2" y="5.4" width="9" height="1" fill="#a8cc48"/><path d="M0.3 2 H4.6 M0.3 4 H4.6" stroke="#0f5424" stroke-width="0.9"/></svg>
<div class="t" style="left:459.55px;top:212.89px;line-height:10.92px;font-size:9.5px;color:#222;-webkit-text-stroke:0.22px #222;">2</div>
<div class="t" style="left:473.00px;top:212.89px;line-height:10.92px;font-size:9.5px;color:#222;-webkit-text-stroke:0.22px #222;transform:scaleX(1.052);">MA-005</div>
<div class="t" style="left:643.83px;top:212.89px;line-height:10.92px;font-size:9.5px;color:#222;-webkit-text-stroke:0.22px #222;">32 ... 47</div>
<svg style="left:439.5px;top:231.78px" width="12" height="8" viewBox="0 0 12 8"><path d="M0.3 0 H11.2 V6.4 H2 L0.3 7.4 Z" fill="#1f7f36"/><rect x="0.3" y="0" width="10.9" height="0.9" fill="#2e9a48"/><rect x="6" y="1.6" width="3.6" height="3.4" fill="#14463c"/><rect x="2.2" y="5.4" width="9" height="1" fill="#a8cc48"/><path d="M0.3 2 H4.6 M0.3 4 H4.6" stroke="#0f5424" stroke-width="0.9"/></svg>
<div class="t" style="left:459.55px;top:230.53px;line-height:10.92px;font-size:9.5px;color:#222;-webkit-text-stroke:0.22px #222;">3</div>
<div class="t" style="left:473.00px;top:230.53px;line-height:10.92px;font-size:9.5px;color:#222;-webkit-text-stroke:0.22px #222;transform:scaleX(1.036);">MD-004</div>
<div class="t" style="left:643.83px;top:230.53px;line-height:10.92px;font-size:9.5px;color:#222;-webkit-text-stroke:0.22px #222;">48 ... 51</div>
<svg style="left:439.5px;top:249.42000000000002px" width="12" height="8" viewBox="0 0 12 8"><path d="M0.3 0 H11.2 V6.4 H2 L0.3 7.4 Z" fill="#1f7f36"/><rect x="0.3" y="0" width="10.9" height="0.9" fill="#2e9a48"/><rect x="6" y="1.6" width="3.6" height="3.4" fill="#14463c"/><rect x="2.2" y="5.4" width="9" height="1" fill="#a8cc48"/><path d="M0.3 2 H4.6 M0.3 4 H4.6" stroke="#0f5424" stroke-width="0.9"/></svg>
<div class="t" style="left:459.55px;top:248.17px;line-height:10.92px;font-size:9.5px;color:#222;-webkit-text-stroke:0.22px #222;">4</div>
<div class="t" style="left:473.00px;top:248.17px;line-height:10.92px;font-size:9.5px;color:#222;-webkit-text-stroke:0.22px #222;transform:scaleX(1.036);">MD-004</div>
<div class="t" style="left:643.83px;top:248.17px;line-height:10.92px;font-size:9.5px;color:#222;-webkit-text-stroke:0.22px #222;">52 ... 55</div>
<svg style="left:439.5px;top:267.05999999999995px" width="12" height="8" viewBox="0 0 12 8"><path d="M0.3 0 H11.2 V6.4 H2 L0.3 7.4 Z" fill="#1f7f36"/><rect x="0.3" y="0" width="10.9" height="0.9" fill="#2e9a48"/><rect x="6" y="1.6" width="3.6" height="3.4" fill="#14463c"/><rect x="2.2" y="5.4" width="9" height="1" fill="#a8cc48"/><path d="M0.3 2 H4.6 M0.3 4 H4.6" stroke="#0f5424" stroke-width="0.9"/></svg>
<div class="t" style="left:459.55px;top:265.81px;line-height:10.92px;font-size:9.5px;color:#222;-webkit-text-stroke:0.22px #222;">5</div>
<div class="t" style="left:473.00px;top:265.81px;line-height:10.92px;font-size:9.5px;color:#222;-webkit-text-stroke:0.22px #222;transform:scaleX(1.036);">MD-004</div>
<div class="t" style="left:643.83px;top:265.81px;line-height:10.92px;font-size:9.5px;color:#222;-webkit-text-stroke:0.22px #222;">56 ... 59</div>
<svg style="left:439.5px;top:284.7px" width="12" height="8" viewBox="0 0 12 8"><path d="M0.3 0 H11.2 V6.4 H2 L0.3 7.4 Z" fill="#1f7f36"/><rect x="0.3" y="0" width="10.9" height="0.9" fill="#2e9a48"/><rect x="6" y="1.6" width="3.6" height="3.4" fill="#14463c"/><rect x="2.2" y="5.4" width="9" height="1" fill="#a8cc48"/><path d="M0.3 2 H4.6 M0.3 4 H4.6" stroke="#0f5424" stroke-width="0.9"/></svg>
<div class="t" style="left:459.55px;top:283.45px;line-height:10.92px;font-size:9.5px;color:#222;-webkit-text-stroke:0.22px #222;">6</div>
<div class="t" style="left:473.00px;top:283.45px;line-height:10.92px;font-size:9.5px;color:#222;-webkit-text-stroke:0.22px #222;transform:scaleX(1.036);">MD-004</div>
<div class="t" style="left:643.83px;top:283.45px;line-height:10.92px;font-size:9.5px;color:#222;-webkit-text-stroke:0.22px #222;">60 ... 63</div>
<svg style="left:439.5px;top:302.34000000000003px" width="12" height="8" viewBox="0 0 12 8"><path d="M0.3 0 H11.2 V6.4 H2 L0.3 7.4 Z" fill="#1f7f36"/><rect x="0.3" y="0" width="10.9" height="0.9" fill="#2e9a48"/><rect x="6" y="1.6" width="3.6" height="3.4" fill="#14463c"/><rect x="2.2" y="5.4" width="9" height="1" fill="#a8cc48"/><path d="M0.3 2 H4.6 M0.3 4 H4.6" stroke="#0f5424" stroke-width="0.9"/></svg>
<div class="t" style="left:459.55px;top:301.09px;line-height:10.92px;font-size:9.5px;color:#222;-webkit-text-stroke:0.22px #222;">7</div>
<div class="t" style="left:473.00px;top:301.09px;line-height:10.92px;font-size:9.5px;color:#222;-webkit-text-stroke:0.22px #222;transform:scaleX(1.036);">MD-004</div>
<div class="t" style="left:643.83px;top:301.09px;line-height:10.92px;font-size:9.5px;color:#222;-webkit-text-stroke:0.22px #222;">64 ... 67</div>
<svg style="left:439.5px;top:319.98px" width="12" height="8" viewBox="0 0 12 8"><path d="M0.3 0 H11.2 V6.4 H2 L0.3 7.4 Z" fill="#1f7f36"/><rect x="0.3" y="0" width="10.9" height="0.9" fill="#2e9a48"/><rect x="6" y="1.6" width="3.6" height="3.4" fill="#14463c"/><rect x="2.2" y="5.4" width="9" height="1" fill="#a8cc48"/><path d="M0.3 2 H4.6 M0.3 4 H4.6" stroke="#0f5424" stroke-width="0.9"/></svg>
<div class="t" style="left:459.55px;top:318.73px;line-height:10.92px;font-size:9.5px;color:#222;-webkit-text-stroke:0.22px #222;">8</div>
<div class="t" style="left:473.00px;top:318.73px;line-height:10.92px;font-size:9.5px;color:#222;-webkit-text-stroke:0.22px #222;transform:scaleX(1.036);">MD-004</div>
<div class="t" style="left:643.83px;top:318.73px;line-height:10.92px;font-size:9.5px;color:#222;-webkit-text-stroke:0.22px #222;">68 ... 71</div>
<svg style="left:439.5px;top:337.62px" width="12" height="8" viewBox="0 0 12 8"><path d="M0.3 0 H11.2 V6.4 H2 L0.3 7.4 Z" fill="#1f7f36"/><rect x="0.3" y="0" width="10.9" height="0.9" fill="#2e9a48"/><rect x="6" y="1.6" width="3.6" height="3.4" fill="#14463c"/><rect x="2.2" y="5.4" width="9" height="1" fill="#a8cc48"/><path d="M0.3 2 H4.6 M0.3 4 H4.6" stroke="#0f5424" stroke-width="0.9"/></svg>
<div class="t" style="left:459.55px;top:336.37px;line-height:10.92px;font-size:9.5px;color:#222;-webkit-text-stroke:0.22px #222;">9</div>
<div class="t" style="left:473.00px;top:336.37px;line-height:10.92px;font-size:9.5px;color:#222;-webkit-text-stroke:0.22px #222;transform:scaleX(1.036);">MC-009</div>
<div class="t" style="left:714.82px;top:336.37px;line-height:10.92px;font-size:9.5px;color:#222;-webkit-text-stroke:0.22px #222;">0 ... 1</div>
<svg style="left:439.5px;top:355.26px" width="12" height="8" viewBox="0 0 12 8"><path d="M0.3 0 H11.2 V6.4 H2 L0.3 7.4 Z" fill="#1f7f36"/><rect x="0.3" y="0" width="10.9" height="0.9" fill="#2e9a48"/><rect x="6" y="1.6" width="3.6" height="3.4" fill="#14463c"/><rect x="2.2" y="5.4" width="9" height="1" fill="#a8cc48"/><path d="M0.3 2 H4.6 M0.3 4 H4.6" stroke="#0f5424" stroke-width="0.9"/></svg>
<div class="t" style="left:456.91px;top:354.01px;line-height:10.92px;font-size:9.5px;color:#222;-webkit-text-stroke:0.22px #222;">10</div>
<div class="t" style="left:473.00px;top:354.01px;line-height:10.92px;font-size:9.5px;color:#222;-webkit-text-stroke:0.22px #222;transform:scaleX(1.036);">MC-009</div>
<div class="t" style="left:714.82px;top:354.01px;line-height:10.92px;font-size:9.5px;color:#222;-webkit-text-stroke:0.22px #222;">2 ... 3</div>
<svg style="left:439.5px;top:372.9px" width="12" height="8" viewBox="0 0 12 8"><path d="M0.3 0 H11.2 V6.4 H2 L0.3 7.4 Z" fill="#1f7f36"/><rect x="0.3" y="0" width="10.9" height="0.9" fill="#2e9a48"/><rect x="6" y="1.6" width="3.6" height="3.4" fill="#14463c"/><rect x="2.2" y="5.4" width="9" height="1" fill="#a8cc48"/><path d="M0.3 2 H4.6 M0.3 4 H4.6" stroke="#0f5424" stroke-width="0.9"/></svg>
<div class="t" style="left:457.26px;top:371.65px;line-height:10.92px;font-size:9.5px;color:#222;-webkit-text-stroke:0.22px #222;">11</div>
<div class="t" style="left:473.00px;top:371.65px;line-height:10.92px;font-size:9.5px;color:#222;-webkit-text-stroke:0.22px #222;transform:scaleX(1.036);">MC-003</div>
<div class="t" style="left:643.83px;top:371.65px;line-height:10.92px;font-size:9.5px;color:#222;-webkit-text-stroke:0.22px #222;">84 ... 85</div>
<div class="t" style="left:714.82px;top:371.65px;line-height:10.92px;font-size:9.5px;color:#222;-webkit-text-stroke:0.22px #222;">4 ... 5</div>
<svg style="left:439.5px;top:390.53999999999996px" width="12" height="8" viewBox="0 0 12 8"><path d="M0.3 0 H11.2 V6.4 H2 L0.3 7.4 Z" fill="#1f7f36"/><rect x="0.3" y="0" width="10.9" height="0.9" fill="#2e9a48"/><rect x="6" y="1.6" width="3.6" height="3.4" fill="#14463c"/><rect x="2.2" y="5.4" width="9" height="1" fill="#a8cc48"/><path d="M0.3 2 H4.6 M0.3 4 H4.6" stroke="#0f5424" stroke-width="0.9"/></svg>
<div class="t" style="left:456.91px;top:389.29px;line-height:10.92px;font-size:9.5px;color:#222;-webkit-text-stroke:0.22px #222;">12</div>
<div class="t" style="left:473.00px;top:389.29px;line-height:10.92px;font-size:9.5px;color:#222;-webkit-text-stroke:0.22px #222;transform:scaleX(1.036);">MC-003</div>
<div class="t" style="left:643.83px;top:389.29px;line-height:10.92px;font-size:9.5px;color:#222;-webkit-text-stroke:0.22px #222;">86 ... 87</div>
<div class="t" style="left:714.82px;top:389.29px;line-height:10.92px;font-size:9.5px;color:#222;-webkit-text-stroke:0.22px #222;">6 ... 7</div>
<svg style="left:439.5px;top:408.17999999999995px" width="12" height="8" viewBox="0 0 12 8"><path d="M0.3 0 H11.2 V6.4 H2 L0.3 7.4 Z" fill="#1f7f36"/><rect x="0.3" y="0" width="10.9" height="0.9" fill="#2e9a48"/><rect x="6" y="1.6" width="3.6" height="3.4" fill="#14463c"/><rect x="2.2" y="5.4" width="9" height="1" fill="#a8cc48"/><path d="M0.3 2 H4.6 M0.3 4 H4.6" stroke="#0f5424" stroke-width="0.9"/></svg>
<div class="t" style="left:456.91px;top:406.93px;line-height:10.92px;font-size:9.5px;color:#222;-webkit-text-stroke:0.22px #222;">13</div>
<div class="t" style="left:473.00px;top:406.93px;line-height:10.92px;font-size:9.5px;color:#222;-webkit-text-stroke:0.22px #222;transform:scaleX(1.036);">MC-003</div>
<div class="t" style="left:643.83px;top:406.93px;line-height:10.92px;font-size:9.5px;color:#222;-webkit-text-stroke:0.22px #222;">88 ... 89</div>
<div class="t" style="left:714.82px;top:406.93px;line-height:10.92px;font-size:9.5px;color:#222;-webkit-text-stroke:0.22px #222;">8 ... 9</div>
<svg style="left:439.5px;top:425.81999999999994px" width="12" height="8" viewBox="0 0 12 8"><path d="M0.3 0 H11.2 V6.4 H2 L0.3 7.4 Z" fill="#1f7f36"/><rect x="0.3" y="0" width="10.9" height="0.9" fill="#2e9a48"/><rect x="6" y="1.6" width="3.6" height="3.4" fill="#14463c"/><rect x="2.2" y="5.4" width="9" height="1" fill="#a8cc48"/><path d="M0.3 2 H4.6 M0.3 4 H4.6" stroke="#0f5424" stroke-width="0.9"/></svg>
<div class="t" style="left:456.91px;top:424.57px;line-height:10.92px;font-size:9.5px;color:#222;-webkit-text-stroke:0.22px #222;">14</div>
<div class="t" style="left:473.00px;top:424.57px;line-height:10.92px;font-size:9.5px;color:#222;-webkit-text-stroke:0.22px #222;transform:scaleX(1.036);">MD-004</div>
<div class="t" style="left:643.83px;top:424.57px;line-height:10.92px;font-size:9.5px;color:#222;-webkit-text-stroke:0.22px #222;">90 ... 93</div>
<svg style="left:439.5px;top:443.46000000000004px" width="12" height="8" viewBox="0 0 12 8"><path d="M0.3 0 H11.2 V6.4 H2 L0.3 7.4 Z" fill="#1f7f36"/><rect x="0.3" y="0" width="10.9" height="0.9" fill="#2e9a48"/><rect x="6" y="1.6" width="3.6" height="3.4" fill="#14463c"/><rect x="2.2" y="5.4" width="9" height="1" fill="#a8cc48"/><path d="M0.3 2 H4.6 M0.3 4 H4.6" stroke="#0f5424" stroke-width="0.9"/></svg>
<div class="t" style="left:456.91px;top:442.21px;line-height:10.92px;font-size:9.5px;color:#222;-webkit-text-stroke:0.22px #222;">15</div>
<div class="t" style="left:473.00px;top:442.21px;line-height:10.92px;font-size:9.5px;color:#222;-webkit-text-stroke:0.22px #222;transform:scaleX(1.036);">MD-004</div>
<div class="t" style="left:643.83px;top:442.21px;line-height:10.92px;font-size:9.5px;color:#222;-webkit-text-stroke:0.22px #222;">94 ... 97</div>
<div class="t" style="left:439.10px;top:459.85px;line-height:10.92px;font-size:9.5px;color:#444;font-weight:bold;transform:scaleX(1.262);">...</div>
<div class="t" style="left:456.91px;top:459.85px;line-height:10.92px;font-size:9.5px;color:#222;-webkit-text-stroke:0.22px #222;">16</div>
<div class="t" style="left:439.10px;top:477.49px;line-height:10.92px;font-size:9.5px;color:#444;font-weight:bold;transform:scaleX(1.262);">...</div>
<div class="t" style="left:456.91px;top:477.49px;line-height:10.92px;font-size:9.5px;color:#222;-webkit-text-stroke:0.22px #222;">17</div>
<div class="t" style="left:439.10px;top:495.13px;line-height:10.92px;font-size:9.5px;color:#444;font-weight:bold;transform:scaleX(1.262);">...</div>
<div class="t" style="left:456.91px;top:495.13px;line-height:10.92px;font-size:9.5px;color:#222;-webkit-text-stroke:0.22px #222;">18</div>
<div class="t" style="left:439.10px;top:512.77px;line-height:10.92px;font-size:9.5px;color:#444;font-weight:bold;transform:scaleX(1.262);">...</div>
<div class="t" style="left:456.91px;top:512.77px;line-height:10.92px;font-size:9.5px;color:#222;-webkit-text-stroke:0.22px #222;">19</div>
<div class="t" style="left:439.10px;top:530.41px;line-height:10.92px;font-size:9.5px;color:#444;font-weight:bold;transform:scaleX(1.262);">...</div>
<div class="t" style="left:456.91px;top:530.41px;line-height:10.92px;font-size:9.5px;color:#222;-webkit-text-stroke:0.22px #222;">20</div>
<div class="t" style="left:439.10px;top:548.05px;line-height:10.92px;font-size:9.5px;color:#444;font-weight:bold;transform:scaleX(1.262);">...</div>
<div class="t" style="left:456.91px;top:548.05px;line-height:10.92px;font-size:9.5px;color:#222;-webkit-text-stroke:0.22px #222;">21</div>
<div class="t" style="left:439.10px;top:565.69px;line-height:10.92px;font-size:9.5px;color:#444;font-weight:bold;transform:scaleX(1.262);">...</div>
<div class="t" style="left:456.91px;top:565.69px;line-height:10.92px;font-size:9.5px;color:#222;-webkit-text-stroke:0.22px #222;">22</div>
<div class="t" style="left:439.10px;top:583.33px;line-height:10.92px;font-size:9.5px;color:#444;font-weight:bold;transform:scaleX(1.262);">...</div>
<div class="t" style="left:456.91px;top:583.33px;line-height:10.92px;font-size:9.5px;color:#222;-webkit-text-stroke:0.22px #222;">23</div>
<div class="t" style="left:439.10px;top:600.97px;line-height:10.92px;font-size:9.5px;color:#444;font-weight:bold;transform:scaleX(1.262);">...</div>
<div class="t" style="left:456.91px;top:600.97px;line-height:10.92px;font-size:9.5px;color:#222;-webkit-text-stroke:0.22px #222;">24</div>
<div class="t" style="left:439.10px;top:618.61px;line-height:10.92px;font-size:9.5px;color:#444;font-weight:bold;transform:scaleX(1.262);">...</div>
<div class="t" style="left:456.91px;top:618.61px;line-height:10.92px;font-size:9.5px;color:#222;-webkit-text-stroke:0.22px #222;">25</div>
<div class="t" style="left:439.10px;top:636.25px;line-height:10.92px;font-size:9.5px;color:#444;font-weight:bold;transform:scaleX(1.262);">...</div>
<div class="t" style="left:456.91px;top:636.25px;line-height:10.92px;font-size:9.5px;color:#222;-webkit-text-stroke:0.22px #222;">26</div>
<div style="left:787.4px;top:83.2px;width:443px;height:570.6px;background:#fff;border:1px solid #b2b2b2"></div>
<div style="left:964.1px;top:84.3px;width:1px;height:18px;background:#ececec"></div>
<div class="t" style="left:855.00px;top:88.45px;line-height:10.92px;font-size:9.5px;color:#333;-webkit-text-stroke:0.22px #333;transform:scaleX(1.038);">Свойство</div>
<div class="t" style="left:1073.80px;top:88.45px;line-height:10.92px;font-size:9.5px;color:#333;-webkit-text-stroke:0.22px #333;transform:scaleX(1.096);">Значение</div>
<div style="left:806.3px;top:103.30000000000001px;width:422.7px;height:16.64px;background:#686868"></div>
<svg style="left:793px;top:108.4px" width="9" height="6" viewBox="0 0 9 6"><path d="M1 1 L4.5 4.3 L8 1" fill="none" stroke="#3a3a3a" stroke-width="1.8"/></svg>
<div class="t" style="left:809.00px;top:107.05px;line-height:10.92px;font-size:9.5px;color:#ececec;-webkit-text-stroke:0.22px #ececec;transform:scaleX(1.017);">General</div>
<div style="left:824px;top:120.54px;width:405px;height:17.64px;background:#f5f5f5"></div>
<div class="t" style="left:826.40px;top:124.69px;line-height:10.92px;font-size:9.5px;color:#222;-webkit-text-stroke:0.22px #222;">Input</div>
<div class="t" style="left:967.20px;top:124.69px;line-height:10.92px;font-size:9.5px;color:#222;-webkit-text-stroke:0.22px #222;">64 ... 67</div>
<div class="t" style="left:826.40px;top:142.33px;line-height:10.92px;font-size:9.5px;color:#222;-webkit-text-stroke:0.22px #222;">Cycle</div>
<div class="t" style="left:967.20px;top:142.33px;line-height:10.92px;font-size:9.5px;color:#222;-webkit-text-stroke:0.22px #222;">0</div>
<div style="left:806.3px;top:156.22px;width:422.7px;height:16.64px;background:#686868"></div>
<svg style="left:793px;top:161.32px" width="9" height="6" viewBox="0 0 9 6"><path d="M1 1 L4.5 4.3 L8 1" fill="none" stroke="#3a3a3a" stroke-width="1.8"/></svg>
<div class="t" style="left:809.00px;top:159.97px;line-height:10.92px;font-size:9.5px;color:#ececec;-webkit-text-stroke:0.22px #ececec;transform:scaleX(1.139);">Filtration</div>
<div class="t" style="left:826.40px;top:177.61px;line-height:10.92px;font-size:9.5px;color:#222;-webkit-text-stroke:0.22px #222;transform:scaleX(1.053);">Channel 1</div>
<svg style="left:964.9px;top:175.66px" width="12" height="12" viewBox="0 0 12 12"><rect x="0.7" y="0.7" width="10.6" height="10.6" rx="2.5" fill="#fff" stroke="#777" stroke-width="1.1"/></svg>
<div style="left:824px;top:191.10000000000002px;width:405px;height:17.64px;background:#f5f5f5"></div>
<div class="t" style="left:826.40px;top:195.25px;line-height:10.92px;font-size:9.5px;color:#222;-webkit-text-stroke:0.22px #222;transform:scaleX(1.053);">Channel 2</div>
<svg style="left:964.9px;top:193.3px" width="12" height="12" viewBox="0 0 12 12"><rect x="0.7" y="0.7" width="10.6" height="10.6" rx="2.5" fill="#fff" stroke="#777" stroke-width="1.1"/></svg>
<div class="t" style="left:826.40px;top:212.89px;line-height:10.92px;font-size:9.5px;color:#222;-webkit-text-stroke:0.22px #222;transform:scaleX(1.053);">Channel 3</div>
<svg style="left:964.9px;top:210.94px" width="12" height="12" viewBox="0 0 12 12"><rect x="0.7" y="0.7" width="10.6" height="10.6" rx="2.5" fill="#fff" stroke="#777" stroke-width="1.1"/></svg>
<div style="left:824px;top:226.38px;width:405px;height:17.64px;background:#f5f5f5"></div>
<div class="t" style="left:826.40px;top:230.53px;line-height:10.92px;font-size:9.5px;color:#222;-webkit-text-stroke:0.22px #222;transform:scaleX(1.053);">Channel 4</div>
<svg style="left:964.9px;top:228.57999999999998px" width="12" height="12" viewBox="0 0 12 12"><rect x="0.7" y="0.7" width="10.6" height="10.6" rx="2.5" fill="#fff" stroke="#777" stroke-width="1.1"/></svg>
<div class="t" style="left:826.40px;top:248.17px;line-height:10.92px;font-size:9.5px;color:#222;-webkit-text-stroke:0.22px #222;transform:scaleX(1.053);">Channel 5</div>
<svg style="left:964.9px;top:246.22px" width="12" height="12" viewBox="0 0 12 12"><rect x="0.5" y="0.5" width="11" height="11" rx="2.5" fill="#0f5fc4"/><path d="M3.2 6.2 L5.2 8.1 L8.8 4" fill="none" stroke="#d8e6ff" stroke-width="1.1"/></svg>
<div style="left:824px;top:261.65999999999997px;width:405px;height:17.64px;background:#f5f5f5"></div>
<div class="t" style="left:826.40px;top:265.81px;line-height:10.92px;font-size:9.5px;color:#222;-webkit-text-stroke:0.22px #222;transform:scaleX(1.053);">Channel 6</div>
<svg style="left:964.9px;top:263.85999999999996px" width="12" height="12" viewBox="0 0 12 12"><rect x="0.5" y="0.5" width="11" height="11" rx="2.5" fill="#0f5fc4"/><path d="M3.2 6.2 L5.2 8.1 L8.8 4" fill="none" stroke="#d8e6ff" stroke-width="1.1"/></svg>
<div class="t" style="left:826.40px;top:283.45px;line-height:10.92px;font-size:9.5px;color:#222;-webkit-text-stroke:0.22px #222;transform:scaleX(1.053);">Channel 7</div>
<svg style="left:964.9px;top:281.5px" width="12" height="12" viewBox="0 0 12 12"><rect x="0.5" y="0.5" width="11" height="11" rx="2.5" fill="#0f5fc4"/><path d="M3.2 6.2 L5.2 8.1 L8.8 4" fill="none" stroke="#d8e6ff" stroke-width="1.1"/></svg>
<div style="left:824px;top:296.94000000000005px;width:405px;height:17.64px;background:#f5f5f5"></div>
<div class="t" style="left:826.40px;top:301.09px;line-height:10.92px;font-size:9.5px;color:#222;-webkit-text-stroke:0.22px #222;transform:scaleX(1.053);">Channel 8</div>
<svg style="left:964.9px;top:299.14000000000004px" width="12" height="12" viewBox="0 0 12 12"><rect x="0.7" y="0.7" width="10.6" height="10.6" rx="2.5" fill="#fff" stroke="#777" stroke-width="1.1"/></svg>
<div class="t" style="left:826.40px;top:318.73px;line-height:10.92px;font-size:9.5px;color:#222;-webkit-text-stroke:0.22px #222;transform:scaleX(1.053);">Channel 9</div>
<svg style="left:964.9px;top:316.78000000000003px" width="12" height="12" viewBox="0 0 12 12"><rect x="0.7" y="0.7" width="10.6" height="10.6" rx="2.5" fill="#fff" stroke="#777" stroke-width="1.1"/></svg>
<div style="left:824px;top:332.22px;width:405px;height:17.64px;background:#f5f5f5"></div>
<div class="t" style="left:826.40px;top:336.37px;line-height:10.92px;font-size:9.5px;color:#222;-webkit-text-stroke:0.22px #222;">Channel 10</div>
<svg style="left:964.9px;top:334.42px" width="12" height="12" viewBox="0 0 12 12"><rect x="0.7" y="0.7" width="10.6" height="10.6" rx="2.5" fill="#fff" stroke="#777" stroke-width="1.1"/></svg>
<div class="t" style="left:826.40px;top:354.01px;line-height:10.92px;font-size:9.5px;color:#222;-webkit-text-stroke:0.22px #222;">Channel 11</div>
<svg style="left:964.9px;top:352.06px" width="12" height="12" viewBox="0 0 12 12"><rect x="0.7" y="0.7" width="10.6" height="10.6" rx="2.5" fill="#fff" stroke="#777" stroke-width="1.1"/></svg>
<div style="left:824px;top:367.5px;width:405px;height:17.64px;background:#f5f5f5"></div>
<div class="t" style="left:826.40px;top:371.65px;line-height:10.92px;font-size:9.5px;color:#222;-webkit-text-stroke:0.22px #222;">Channel 12</div>
<svg style="left:964.9px;top:369.7px" width="12" height="12" viewBox="0 0 12 12"><rect x="0.7" y="0.7" width="10.6" height="10.6" rx="2.5" fill="#fff" stroke="#777" stroke-width="1.1"/></svg>
<div class="t" style="left:826.40px;top:389.29px;line-height:10.92px;font-size:9.5px;color:#222;-webkit-text-stroke:0.22px #222;">Channel 13</div>
<svg style="left:964.9px;top:387.34px" width="12" height="12" viewBox="0 0 12 12"><rect x="0.7" y="0.7" width="10.6" height="10.6" rx="2.5" fill="#fff" stroke="#777" stroke-width="1.1"/></svg>
<div style="left:824px;top:402.78px;width:405px;height:17.64px;background:#f5f5f5"></div>
<div class="t" style="left:826.40px;top:406.93px;line-height:10.92px;font-size:9.5px;color:#222;-webkit-text-stroke:0.22px #222;">Channel 14</div>
<svg style="left:964.9px;top:404.97999999999996px" width="12" height="12" viewBox="0 0 12 12"><rect x="0.7" y="0.7" width="10.6" height="10.6" rx="2.5" fill="#fff" stroke="#777" stroke-width="1.1"/></svg>
<div class="t" style="left:826.40px;top:424.57px;line-height:10.92px;font-size:9.5px;color:#222;-webkit-text-stroke:0.22px #222;">Channel 15</div>
<svg style="left:964.9px;top:422.61999999999995px" width="12" height="12" viewBox="0 0 12 12"><rect x="0.7" y="0.7" width="10.6" height="10.6" rx="2.5" fill="#fff" stroke="#777" stroke-width="1.1"/></svg>
<div style="left:824px;top:438.06000000000006px;width:405px;height:17.64px;background:#f5f5f5"></div>
<div class="t" style="left:826.40px;top:442.21px;line-height:10.92px;font-size:9.5px;color:#222;-webkit-text-stroke:0.22px #222;">Channel 16</div>
<svg style="left:964.9px;top:440.26000000000005px" width="12" height="12" viewBox="0 0 12 12"><rect x="0.7" y="0.7" width="10.6" height="10.6" rx="2.5" fill="#fff" stroke="#777" stroke-width="1.1"/></svg>
<div style="left:1246px;top:40px;width:434px;height:16px;background:#dadada;border:1px solid #cdcdcd"></div>
<div class="t" style="left:1250.00px;top:43.05px;line-height:10.92px;font-size:9.5px;color:#3a3a3a;-webkit-text-stroke:0.22px #3a3a3a;transform:scaleX(1.084);">Библиотека</div>
<svg style="left:1659px;top:44px" width="8" height="8"><path d="M2.5 2.5 V0.6 H7.4 V5.5 H5.5" fill="none" stroke="#333" stroke-width="1.1"/><path d="M2.5 1.3 H7.4" stroke="#333" stroke-width="1.4"/><rect x="0.6" y="2.8" width="4.9" height="4.6" fill="none" stroke="#333" stroke-width="1.2"/><path d="M0.6 3.5 H5.5" stroke="#333" stroke-width="1.4"/></svg>
<svg style="left:1676px;top:44px" width="8" height="8"><path d="M0.8 0.8 L7.2 7.2 M7.2 0.8 L0.8 7.2" stroke="#888" stroke-width="1.5"/></svg>
<div style="left:1247px;top:58.8px;width:433px;height:16.4px;background:#fff;border-bottom:1px solid #e2e2e2"></div>
<div class="t" style="left:1249.40px;top:62.65px;line-height:10.92px;font-size:9.5px;color:#333;-webkit-text-stroke:0.22px #333;transform:scaleX(1.038);">Технических средств</div>
<div style="left:1247px;top:76px;width:433px;height:16px;background:#fff"></div>
<div class="t" style="left:1249.40px;top:79.15px;line-height:10.92px;font-size:9.5px;color:#b4b4b4;font-style:italic;-webkit-text-stroke:0.22px #b4b4b4;transform:scaleX(0.926);">Фильтр</div>
<div style="left:1246.6px;top:92.6px;width:433.4px;height:455.7px;background:#fff;border:1px solid #b2b2b2;border-right:none"></div>
<svg style="left:1250.9px;top:98.3px" width="9" height="6" viewBox="0 0 9 6"><path d="M1 1 L4.5 4.3 L8 1" fill="none" stroke="#3a3a3a" stroke-width="1.8"/></svg>
<svg style="left:1267.7px;top:96.4px" width="14" height="11" viewBox="0 0 14 11"><rect x="0.4" y="0.4" width="13" height="10" fill="#def3dc" stroke="#c4e2c0" stroke-width="0.8"/><rect x="0.4" y="0.4" width="4.5" height="1.2" fill="#a8dca0"/><text x="7" y="8.3" text-anchor="middle" font-family="Liberation Sans" font-weight="bold" font-size="6.6" fill="#58a2e6" textLength="9.6" lengthAdjust="spacingAndGlyphs">LIB</text></svg>
<div class="t" style="left:1287.00px;top:96.95px;line-height:10.92px;font-size:9.5px;color:#1e1e1e;-webkit-text-stroke:0.22px #1e1e1e;transform:scaleX(0.939);">Технические средства</div>
<svg style="left:1269.3px;top:112.7px" width="6" height="8" viewBox="0 0 6 8"><path d="M1 0.8 L4.6 4 L1 7.2" fill="none" stroke="#8a8a8a" stroke-width="1.3"/></svg>
<svg style="left:1285.7px;top:111.0px" width="14" height="11" viewBox="0 0 14 11"><rect x="0.4" y="0.4" width="13" height="10" fill="#def3dc" stroke="#c4e2c0" stroke-width="0.8"/><rect x="0.4" y="0.4" width="4.5" height="1.2" fill="#a8dca0"/><text x="7" y="8.3" text-anchor="middle" font-family="Liberation Sans" font-weight="bold" font-size="6.6" fill="#58a2e6" textLength="9.6" lengthAdjust="spacingAndGlyphs">LIB</text></svg>
<div class="t" style="left:1305.00px;top:111.55px;line-height:10.92px;font-size:9.5px;color:#1e1e1e;-webkit-text-stroke:0.22px #1e1e1e;">ECO ORION</div>
<svg style="left:1268.9px;top:127.6px" width="9" height="6" viewBox="0 0 9 6"><path d="M1 1 L4.5 4.3 L8 1" fill="none" stroke="#3a3a3a" stroke-width="1.8"/></svg>
<svg style="left:1285.7px;top:125.7px" width="14" height="11" viewBox="0 0 14 11"><rect x="0.4" y="0.4" width="13" height="10" fill="#def3dc" stroke="#c4e2c0" stroke-width="0.8"/><rect x="0.4" y="0.4" width="4.5" height="1.2" fill="#a8dca0"/><text x="7" y="8.3" text-anchor="middle" font-family="Liberation Sans" font-weight="bold" font-size="6.6" fill="#58a2e6" textLength="9.6" lengthAdjust="spacingAndGlyphs">LIB</text></svg>
<div class="t" style="left:1305.00px;top:126.25px;line-height:10.92px;font-size:9.5px;color:#1e1e1e;-webkit-text-stroke:0.22px #1e1e1e;">ORION</div>
<svg style="left:1287.3px;top:142.6px" width="6" height="8" viewBox="0 0 6 8"><path d="M1 0.8 L4.6 4 L1 7.2" fill="none" stroke="#8a8a8a" stroke-width="1.3"/></svg>
<svg style="left:1303.7px;top:140.89999999999998px" width="14" height="11" viewBox="0 0 14 11"><rect x="0.4" y="0.4" width="13" height="10" fill="#def3dc" stroke="#c4e2c0" stroke-width="0.8"/><rect x="0.4" y="0.4" width="4.5" height="1.2" fill="#a8dca0"/><text x="7" y="8.3" text-anchor="middle" font-family="Liberation Sans" font-weight="bold" font-size="6.6" fill="#58a2e6" textLength="9.6" lengthAdjust="spacingAndGlyphs">LIB</text></svg>
<div class="t" style="left:1323.00px;top:141.45px;line-height:10.92px;font-size:9.5px;color:#1e1e1e;-webkit-text-stroke:0.22px #1e1e1e;transform:scaleX(0.890);">AI</div>
<svg style="left:1287.3px;top:157.8px" width="6" height="8" viewBox="0 0 6 8"><path d="M1 0.8 L4.6 4 L1 7.2" fill="none" stroke="#8a8a8a" stroke-width="1.3"/></svg>
<svg style="left:1303.7px;top:156.1px" width="14" height="11" viewBox="0 0 14 11"><rect x="0.4" y="0.4" width="13" height="10" fill="#def3dc" stroke="#c4e2c0" stroke-width="0.8"/><rect x="0.4" y="0.4" width="4.5" height="1.2" fill="#a8dca0"/><text x="7" y="8.3" text-anchor="middle" font-family="Liberation Sans" font-weight="bold" font-size="6.6" fill="#58a2e6" textLength="9.6" lengthAdjust="spacingAndGlyphs">LIB</text></svg>
<div class="t" style="left:1323.00px;top:156.65px;line-height:10.92px;font-size:9.5px;color:#1e1e1e;-webkit-text-stroke:0.22px #1e1e1e;transform:scaleX(1.092);">AO</div>
<svg style="left:1286.9px;top:172.9px" width="9" height="6" viewBox="0 0 9 6"><path d="M1 1 L4.5 4.3 L8 1" fill="none" stroke="#3a3a3a" stroke-width="1.8"/></svg>
<svg style="left:1303.7px;top:171.0px" width="14" height="11" viewBox="0 0 14 11"><rect x="0.4" y="0.4" width="13" height="10" fill="#def3dc" stroke="#c4e2c0" stroke-width="0.8"/><rect x="0.4" y="0.4" width="4.5" height="1.2" fill="#a8dca0"/><text x="7" y="8.3" text-anchor="middle" font-family="Liberation Sans" font-weight="bold" font-size="6.6" fill="#58a2e6" textLength="9.6" lengthAdjust="spacingAndGlyphs">LIB</text></svg>
<div class="t" style="left:1323.00px;top:171.55px;line-height:10.92px;font-size:9.5px;color:#1e1e1e;-webkit-text-stroke:0.22px #1e1e1e;transform:scaleX(0.947);">DI</div>
<svg style="left:1322.5px;top:189.7px" width="12" height="8" viewBox="0 0 12 8"><path d="M0.3 0 H11.2 V6.4 H2 L0.3 7.4 Z" fill="#1f7f36"/><rect x="0.3" y="0" width="10.9" height="0.9" fill="#2e9a48"/><rect x="6" y="1.6" width="3.6" height="3.4" fill="#14463c"/><rect x="2.2" y="5.4" width="9" height="1" fill="#a8cc48"/><path d="M0.3 2 H4.6 M0.3 4 H4.6" stroke="#0f5424" stroke-width="0.9"/></svg>
<div class="t" style="left:1341.00px;top:188.45px;line-height:10.92px;font-size:9.5px;color:#1e1e1e;-webkit-text-stroke:0.22px #1e1e1e;">MD-001</div>
<div style="left:1317.6px;top:202.3px;width:362.4px;height:16px;background:#d9d9d9"></div>
<svg style="left:1322.5px;top:206.8px" width="12" height="8" viewBox="0 0 12 8"><path d="M0.3 0 H11.2 V6.4 H2 L0.3 7.4 Z" fill="#1f7f36"/><rect x="0.3" y="0" width="10.9" height="0.9" fill="#2e9a48"/><rect x="6" y="1.6" width="3.6" height="3.4" fill="#14463c"/><rect x="2.2" y="5.4" width="9" height="1" fill="#a8cc48"/><path d="M0.3 2 H4.6 M0.3 4 H4.6" stroke="#0f5424" stroke-width="0.9"/></svg>
<div class="t" style="left:1341.00px;top:205.55px;line-height:10.92px;font-size:9.5px;color:#1e1e1e;-webkit-text-stroke:0.22px #1e1e1e;">MD-004</div>
<svg style="left:1287.3px;top:222.70000000000002px" width="6" height="8" viewBox="0 0 6 8"><path d="M1 0.8 L4.6 4 L1 7.2" fill="none" stroke="#8a8a8a" stroke-width="1.3"/></svg>
<svg style="left:1303.7px;top:221.0px" width="14" height="11" viewBox="0 0 14 11"><rect x="0.4" y="0.4" width="13" height="10" fill="#def3dc" stroke="#c4e2c0" stroke-width="0.8"/><rect x="0.4" y="0.4" width="4.5" height="1.2" fill="#a8dca0"/><text x="7" y="8.3" text-anchor="middle" font-family="Liberation Sans" font-weight="bold" font-size="6.6" fill="#58a2e6" textLength="9.6" lengthAdjust="spacingAndGlyphs">LIB</text></svg>
<div class="t" style="left:1323.00px;top:221.55px;line-height:10.92px;font-size:9.5px;color:#1e1e1e;-webkit-text-stroke:0.22px #1e1e1e;transform:scaleX(1.053);">DO</div>
<svg style="left:1287.3px;top:237.9px" width="6" height="8" viewBox="0 0 6 8"><path d="M1 0.8 L4.6 4 L1 7.2" fill="none" stroke="#8a8a8a" stroke-width="1.3"/></svg>
<svg style="left:1303.7px;top:236.2px" width="14" height="11" viewBox="0 0 14 11"><rect x="0.4" y="0.4" width="13" height="10" fill="#def3dc" stroke="#c4e2c0" stroke-width="0.8"/><rect x="0.4" y="0.4" width="4.5" height="1.2" fill="#a8dca0"/><text x="7" y="8.3" text-anchor="middle" font-family="Liberation Sans" font-weight="bold" font-size="6.6" fill="#58a2e6" textLength="9.6" lengthAdjust="spacingAndGlyphs">LIB</text></svg>
<div class="t" style="left:1323.00px;top:236.75px;line-height:10.92px;font-size:9.5px;color:#1e1e1e;-webkit-text-stroke:0.22px #1e1e1e;transform:scaleX(1.108);">IM</div>
<svg style="left:1287.3px;top:253.20000000000002px" width="6" height="8" viewBox="0 0 6 8"><path d="M1 0.8 L4.6 4 L1 7.2" fill="none" stroke="#8a8a8a" stroke-width="1.3"/></svg>
<svg style="left:1303.7px;top:251.5px" width="14" height="11" viewBox="0 0 14 11"><rect x="0.4" y="0.4" width="13" height="10" fill="#def3dc" stroke="#c4e2c0" stroke-width="0.8"/><rect x="0.4" y="0.4" width="4.5" height="1.2" fill="#a8dca0"/><text x="7" y="8.3" text-anchor="middle" font-family="Liberation Sans" font-weight="bold" font-size="6.6" fill="#58a2e6" textLength="9.6" lengthAdjust="spacingAndGlyphs">LIB</text></svg>
<div class="t" style="left:1323.00px;top:252.05px;line-height:10.92px;font-size:9.5px;color:#1e1e1e;-webkit-text-stroke:0.22px #1e1e1e;transform:scaleX(0.866);">PLC</div>
<svg style="left:1251.3px;top:268.4px" width="6" height="8" viewBox="0 0 6 8"><path d="M1 0.8 L4.6 4 L1 7.2" fill="none" stroke="#8a8a8a" stroke-width="1.3"/></svg>
<svg style="left:1267.7px;top:266.7px" width="14" height="11" viewBox="0 0 14 11"><rect x="0.4" y="0.4" width="13" height="10" fill="#def3dc" stroke="#c4e2c0" stroke-width="0.8"/><rect x="0.4" y="0.4" width="4.5" height="1.2" fill="#a8dca0"/><text x="7" y="8.3" text-anchor="middle" font-family="Liberation Sans" font-weight="bold" font-size="6.6" fill="#58a2e6" textLength="9.6" lengthAdjust="spacingAndGlyphs">LIB</text></svg>
<div class="t" style="left:1287.00px;top:267.25px;line-height:10.92px;font-size:9.5px;color:#1e1e1e;-webkit-text-stroke:0.22px #1e1e1e;transform:scaleX(1.074);">Технические средства проекта (неидентифицированные)</div>
<div class="t" style="left:1250.00px;top:556.95px;line-height:10.92px;font-size:9.5px;color:#333;-webkit-text-stroke:0.22px #333;transform:scaleX(1.021);">MD-004, Модуль ввода 16xDI</div>
<div style="left:1242px;top:664.5px;width:438px;height:1px;background:#c8c8c8"></div>
<div style="left:0px;top:671px;width:367px;height:16.3px;background:#dadada;border:1px solid #cdcdcd"></div>
<div class="t" style="left:4.00px;top:675.45px;line-height:10.92px;font-size:9.5px;color:#3a3a3a;-webkit-text-stroke:0.22px #3a3a3a;transform:scaleX(1.053);">Диагностика</div>
<svg style="left:335px;top:675px" width="8" height="8"><path d="M2.5 2.5 V0.6 H7.4 V5.5 H5.5" fill="none" stroke="#333" stroke-width="1.1"/><path d="M2.5 1.3 H7.4" stroke="#333" stroke-width="1.4"/><rect x="0.6" y="2.8" width="4.9" height="4.6" fill="none" stroke="#333" stroke-width="1.2"/><path d="M0.6 3.5 H5.5" stroke="#333" stroke-width="1.4"/></svg>
<svg style="left:353px;top:675px" width="8" height="8"><path d="M0.8 0.8 L7.2 7.2 M7.2 0.8 L0.8 7.2" stroke="#333" stroke-width="1.5"/></svg>
<div style="left:3px;top:690.8px;width:240px;height:17.4px;background:#fff;border-bottom:1.5px solid #b8b8b8"></div>
<div class="t" style="left:4.00px;top:695.35px;line-height:10.92px;font-size:9.5px;color:#222;-webkit-text-stroke:0.22px #222;transform:scaleX(0.983);">KC_A1</div>
<svg style="left:249px;top:692.5px" width="13" height="14" viewBox="0 0 13 14"><circle cx="6.5" cy="7" r="5.6" fill="#6aa0e0" stroke="#3a70c0" stroke-width="1"/><path d="M3.5 7 A3 3 0 0 1 9.3 6" fill="none" stroke="#fff" stroke-width="1.2"/><path d="M9.5 7.5 A3 3 0 0 1 3.8 8" fill="none" stroke="#fff" stroke-width="1.2"/></svg>
<svg style="left:270.6px;top:694px" width="9" height="11" viewBox="0 0 9 11"><path d="M0.5 0.5 L8.5 5.5 L0.5 10.5 Z" fill="#b9b9b9"/></svg>
<svg style="left:288.2px;top:693px" width="14" height="14" viewBox="0 0 14 14"><circle cx="7" cy="7" r="5.9" fill="none" stroke="#6e6e6e" stroke-width="1.6"/><rect x="4.6" y="4.6" width="4.8" height="4.8" rx="0.8" fill="#6e6e6e"/></svg>
<svg style="left:308.5px;top:693px" width="14" height="14" viewBox="0 0 14 14"><circle cx="7" cy="7" r="5.9" fill="none" stroke="#6e6e6e" stroke-width="1.6"/><path d="M5.5 4 L10 7 L5.5 10 Z" fill="#6e6e6e"/></svg>
<svg style="left:328.8px;top:692.5px" width="15" height="15" viewBox="0 0 15 15"><rect x="1" y="1.5" width="11" height="10" fill="#fff" stroke="#3040a0" stroke-width="1"/><rect x="1" y="1.5" width="11" height="3" fill="#2a3aa8"/><path d="M3 6.5 h2 v3 h-2z M6.5 6.5 h2 v3 h-2z" fill="#3a50b0"/><circle cx="11" cy="11" r="3.2" fill="#e05060" stroke="#3040a0" stroke-width="1"/></svg>
<svg style="left:350.5px;top:692.5px" width="12" height="15" viewBox="0 0 12 15"><circle cx="6" cy="5.5" r="5" fill="#fbf0a0" stroke="#e0c860" stroke-width="0.8"/><path d="M4 11 H8 L6 14.5 Z" fill="#8a7aa8"/></svg>
<div style="left:1.7px;top:713.4px;width:363.3px;height:161.3px;background:#fff;border:1px solid #b2b2b2"></div>
<div style="left:222px;top:714.5px;width:1px;height:18px;background:#ececec"></div>
<div class="t" style="left:77.20px;top:718.45px;line-height:10.92px;font-size:9.5px;color:#333;-webkit-text-stroke:0.22px #333;transform:scaleX(1.075);">Наименование</div>
<div class="t" style="left:262.50px;top:718.45px;line-height:10.92px;font-size:9.5px;color:#333;-webkit-text-stroke:0.22px #333;transform:scaleX(1.092);">Значение</div>
<div style="left:348px;top:714.5px;width:16px;height:160px;background:#f4f4f4"></div>
<div style="left:355.7px;top:729px;width:2.2px;height:34px;background:#8a8a8a;border-radius:1px"></div>
<div style="left:20.3px;top:732.6px;width:327.5px;height:16.8px;background:#686868"></div>
<svg style="left:7.2px;top:738.0999999999999px" width="9" height="6" viewBox="0 0 9 6"><path d="M1 1 L4.5 4.3 L8 1" fill="none" stroke="#3a3a3a" stroke-width="1.8"/></svg>
<div class="t" style="left:23.20px;top:736.55px;line-height:10.92px;font-size:9.5px;color:#e8e8e8;-webkit-text-stroke:0.22px #e8e8e8;transform:scaleX(1.100);">Основное</div>
<div style="left:38.3px;top:750.0px;width:309.5px;height:17.6px;background:#d0d0d0"></div>
<div class="t" style="left:40.60px;top:754.15px;line-height:10.92px;font-size:9.5px;color:#222;-webkit-text-stroke:0.22px #222;transform:scaleX(1.062);">Устройство</div>
<div class="t" style="left:40.60px;top:771.75px;line-height:10.92px;font-size:9.5px;color:#222;-webkit-text-stroke:0.22px #222;transform:scaleX(0.990);">IP-адрес</div>
<div style="left:38.3px;top:785.1999999999999px;width:309.5px;height:17.6px;background:#f5f5f5"></div>
<div class="t" style="left:40.60px;top:789.35px;line-height:10.92px;font-size:9.5px;color:#222;-webkit-text-stroke:0.22px #222;transform:scaleX(1.019);">MAC-адрес</div>
<div class="t" style="left:40.60px;top:806.95px;line-height:10.92px;font-size:9.5px;color:#222;-webkit-text-stroke:0.22px #222;transform:scaleX(1.089);">Режим</div>
<div style="left:38.3px;top:820.4px;width:309.5px;height:17.6px;background:#f5f5f5"></div>
<div class="t" style="left:40.60px;top:824.55px;line-height:10.92px;font-size:9.5px;color:#222;-webkit-text-stroke:0.22px #222;transform:scaleX(0.972);">Статус</div>
<div class="t" style="left:40.60px;top:842.15px;line-height:10.92px;font-size:9.5px;color:#222;-webkit-text-stroke:0.22px #222;transform:scaleX(1.032);">Наименование PLC</div>
<div style="left:38.3px;top:855.6px;width:309.5px;height:17.6px;background:#f5f5f5"></div>
<div class="t" style="left:40.60px;top:859.75px;line-height:10.92px;font-size:9.5px;color:#222;-webkit-text-stroke:0.22px #222;transform:scaleX(0.966);">Версия PLC</div>
<div style="left:7px;top:876.5px;width:90px;height:17px;background:#f8f8f8"></div>
<div class="t" style="left:16.90px;top:881.25px;line-height:10.92px;font-size:9.5px;color:#2a2a2a;-webkit-text-stroke:0.22px #2a2a2a;transform:scaleX(0.961);">Параметры PLC</div>
<div class="t" style="left:107.00px;top:881.25px;line-height:10.92px;font-size:9.5px;color:#2a2a2a;-webkit-text-stroke:0.22px #2a2a2a;transform:scaleX(1.010);">Диагностический буфер PLC</div>
<div class="t" style="left:255.80px;top:881.25px;line-height:10.92px;font-size:9.5px;color:#2a2a2a;-webkit-text-stroke:0.22px #2a2a2a;">Резервирование</div>
<div style="left:343px;top:876.5px;width:24px;height:17px;background:#f4f4f4"></div>
<svg style="left:345.5px;top:880px" width="5" height="9" viewBox="0 0 5 9"><path d="M4.5 0.5 L0.5 4.5 L4.5 8.5 Z" fill="#222"/></svg>
<svg style="left:357.5px;top:880px" width="5" height="9" viewBox="0 0 5 9"><path d="M0.5 0.5 L4.5 4.5 L0.5 8.5 Z" fill="#999"/></svg>
<div style="left:371.9px;top:671px;width:868px;height:16.3px;background:#dadada;border:1px solid #cdcdcd"></div>
<div class="t" style="left:375.90px;top:675.45px;line-height:10.92px;font-size:9.5px;color:#3a3a3a;-webkit-text-stroke:0.22px #3a3a3a;transform:scaleX(1.036);">Контрольные значения</div>
<svg style="left:1206px;top:675px" width="8" height="8"><path d="M2.5 2.5 V0.6 H7.4 V5.5 H5.5" fill="none" stroke="#333" stroke-width="1.1"/><path d="M2.5 1.3 H7.4" stroke="#333" stroke-width="1.4"/><rect x="0.6" y="2.8" width="4.9" height="4.6" fill="none" stroke="#333" stroke-width="1.2"/><path d="M0.6 3.5 H5.5" stroke="#333" stroke-width="1.4"/></svg>
<svg style="left:1225px;top:675px" width="8" height="8"><path d="M0.8 0.8 L7.2 7.2 M7.2 0.8 L0.8 7.2" stroke="#333" stroke-width="1.5"/></svg>
<svg style="left:382.5px;top:692.5px" width="15" height="15" viewBox="0 0 15 15"><path d="M5 0.5 H10 V5 H14.5 V10 H10 V14.5 H5 V10 H0.5 V5 H5 Z" fill="#3cb832" stroke="#2a9a20" stroke-width="0.8"/></svg>
<svg style="left:406.3px;top:692.5px" width="15" height="15" viewBox="0 0 15 15"><path d="M6 1.2 H14.5 M8 7.5 H14.5 M6 13.8 H14.5" stroke="#2a50e0" stroke-width="2"/><path d="M2.8 4.5 H5.6 V6.5 H7.6 V9.3 H5.6 V11.3 H2.8 V9.3 H0.8 V6.5 H2.8 Z" fill="#3cb832"/></svg>
<svg style="left:430.6px;top:692.5px" width="15" height="15" viewBox="0 0 15 15"><path d="M1.5 1.5 L13.5 13.5 M13.5 1.5 L1.5 13.5" stroke="#e02020" stroke-width="2.8"/></svg>
<div class="t" style="left:452.70px;top:694.85px;line-height:10.92px;font-size:9.5px;color:#333;-webkit-text-stroke:0.15px #333;transform:scaleX(0.933);">PLC:</div>
<div style="left:478.8px;top:691.5px;width:86.6px;height:16.3px;background:#fff;border:1px solid #e4e4e4"></div>
<div class="t" style="left:480.50px;top:694.85px;line-height:10.92px;font-size:9.5px;color:#222;-webkit-text-stroke:0.15px #222;transform:scaleX(0.963);">KC_A2</div>
<svg style="left:553px;top:697px" width="8" height="5" viewBox="0 0 8 5"><path d="M0.5 0.5 L4 4 L7.5 0.5" fill="none" stroke="#666" stroke-width="1"/></svg>
<svg style="left:574.9px;top:693px" width="14" height="14" viewBox="0 0 14 14"><circle cx="7" cy="7" r="6" fill="#7aaae8" stroke="#4a7cc8" stroke-width="1"/><path d="M3.8 7 A3.2 3.2 0 0 1 10 6" fill="none" stroke="#fff" stroke-width="1.2"/><path d="M10.2 7.6 A3.2 3.2 0 0 1 4 8" fill="none" stroke="#fff" stroke-width="1.2"/></svg>
<div style="left:598px;top:692px;width:1px;height:16px;background:#d0d0d0"></div>
<svg style="left:606px;top:693px" width="15" height="14" viewBox="0 0 15 14"><path d="M9 1 L14.5 7 L9 13 Z" fill="#555"/><path d="M1 3 H8 M1 6 H8 M1 9 H8 M1 12 H6" stroke="#666" stroke-width="1.2"/></svg>
<div style="left:630.4px;top:692px;width:1px;height:16px;background:#d0d0d0"></div>
<svg style="left:641.3px;top:693.5px" width="10" height="13" viewBox="0 0 10 13"><path d="M0.5 0.5 L9.5 6.5 L0.5 12.5 Z" fill="#2ab040"/></svg>
<div class="t" style="left:661.60px;top:694.85px;line-height:10.92px;font-size:9.5px;color:#333;-webkit-text-stroke:0.15px #333;transform:scaleX(1.012);">Период (мс):</div>
<div style="left:723.9px;top:691.5px;width:28.4px;height:16.3px;background:#fff"></div>
<div class="t" style="left:726.60px;top:694.85px;line-height:10.92px;font-size:9.5px;color:#222;-webkit-text-stroke:0.15px #222;transform:scaleX(0.977);">200</div>
<div style="left:753.5px;top:691.5px;width:12.4px;height:16.3px;background:#f4f4f4;border:1px solid #d8d8d8"></div>
<svg style="left:757px;top:694.5px" width="6" height="11" viewBox="0 0 6 11"><path d="M0.5 4 L3 1 L5.5 4 Z M0.5 7 L3 10 L5.5 7 Z" fill="#444"/></svg>
<div style="left:372px;top:710px;width:867.5px;height:163.2px;background:#fff;border:1px solid #b2b2b2"></div>
<div style="left:1239px;top:688px;width:1px;height:22.5px;background:#c4c4c4"></div>
<div style="left:852.2px;top:711.5px;width:1px;height:19px;background:#ececec"></div>
<div style="left:923.2px;top:711.5px;width:1px;height:19px;background:#ececec"></div>
<div style="left:994.2px;top:711.5px;width:1px;height:19px;background:#ececec"></div>
<div style="left:1082.6px;top:711.5px;width:1px;height:19px;background:#ececec"></div>
<div class="t" style="left:577.60px;top:717.55px;line-height:10.92px;font-size:9.5px;color:#333;-webkit-text-stroke:0.22px #333;transform:scaleX(1.069);">Наименование</div>
<div class="t" style="left:880.40px;top:717.55px;line-height:10.92px;font-size:9.5px;color:#333;-webkit-text-stroke:0.22px #333;transform:scaleX(1.098);">Тип</div>
<div class="t" style="left:946.00px;top:717.55px;line-height:10.92px;font-size:9.5px;color:#333;-webkit-text-stroke:0.22px #333;transform:scaleX(0.985);">Адрес</div>
<div class="t" style="left:1016.40px;top:717.55px;line-height:10.92px;font-size:9.5px;color:#333;-webkit-text-stroke:0.22px #333;transform:scaleX(1.063);">Значение</div>
<div class="t" style="left:1106.20px;top:717.55px;line-height:10.92px;font-size:9.5px;color:#333;-webkit-text-stroke:0.22px #333;transform:scaleX(1.077);">Изменить значение</div>
<div style="left:1222px;top:711px;width:16px;height:161px;background:#f4f4f4"></div>
<div style="left:1229px;top:726.6px;width:2.2px;height:16px;background:#8a8a8a;border-radius:1px"></div>
<svg style="left:377.9px;top:736.2px" width="9" height="6" viewBox="0 0 9 6"><path d="M1 1 L4.5 4.3 L8 1" fill="none" stroke="#3a3a3a" stroke-width="1.8"/></svg>
<div class="t" style="left:393.50px;top:734.85px;line-height:10.92px;font-size:9.5px;color:#222;-webkit-text-stroke:0.22px #222;transform:scaleX(0.901);">A_SKV::AIS_KC_A1</div>
<div class="t" style="left:856.30px;top:734.85px;line-height:10.92px;font-size:9.5px;color:#222;-webkit-text-stroke:0.22px #222;transform:scaleX(0.908);">STRUCT</div>
<div style="left:408px;top:748.3000000000001px;width:814px;height:17.6px;background:#f5f5f5"></div>
<div class="t" style="left:410.90px;top:752.45px;line-height:10.92px;font-size:9.5px;color:#222;-webkit-text-stroke:0.22px #222;transform:scaleX(0.944);">ALG_TRIG_AOSS_FROMPRU_NO</div>
<div class="t" style="left:856.30px;top:752.45px;line-height:10.92px;font-size:9.5px;color:#222;-webkit-text-stroke:0.22px #222;transform:scaleX(0.966);">BOOL</div>
<div class="t" style="left:926.40px;top:752.45px;line-height:10.92px;font-size:9.5px;color:#222;-webkit-text-stroke:0.22px #222;transform:scaleX(0.974);">X8724.0</div>
<div class="t" style="left:997.40px;top:752.45px;line-height:10.92px;font-size:9.5px;color:#222;-webkit-text-stroke:0.22px #222;transform:scaleX(0.862);">FALSE</div>
<div class="t" style="left:410.90px;top:770.05px;line-height:10.92px;font-size:9.5px;color:#222;-webkit-text-stroke:0.22px #222;transform:scaleX(0.937);">ALG_TRIG_AOSS_FROMPRU_NC</div>
<div class="t" style="left:856.30px;top:770.05px;line-height:10.92px;font-size:9.5px;color:#222;-webkit-text-stroke:0.22px #222;transform:scaleX(0.966);">BOOL</div>
<div class="t" style="left:926.40px;top:770.05px;line-height:10.92px;font-size:9.5px;color:#222;-webkit-text-stroke:0.22px #222;transform:scaleX(0.974);">X8724.1</div>
<div class="t" style="left:997.40px;top:770.05px;line-height:10.92px;font-size:9.5px;color:#222;-webkit-text-stroke:0.22px #222;transform:scaleX(0.862);">FALSE</div>
<div style="left:408px;top:783.5px;width:814px;height:17.6px;background:#f5f5f5"></div>
<div class="t" style="left:410.90px;top:787.65px;line-height:10.92px;font-size:9.5px;color:#222;-webkit-text-stroke:0.22px #222;transform:scaleX(0.944);">ALG_TRIG_AOBS_FROMPRU_NO</div>
<div class="t" style="left:856.30px;top:787.65px;line-height:10.92px;font-size:9.5px;color:#222;-webkit-text-stroke:0.22px #222;transform:scaleX(0.966);">BOOL</div>
<div class="t" style="left:926.40px;top:787.65px;line-height:10.92px;font-size:9.5px;color:#222;-webkit-text-stroke:0.22px #222;transform:scaleX(0.974);">X8724.2</div>
<div class="t" style="left:997.40px;top:787.65px;line-height:10.92px;font-size:9.5px;color:#222;-webkit-text-stroke:0.22px #222;transform:scaleX(0.862);">FALSE</div>
<div class="t" style="left:410.90px;top:805.25px;line-height:10.92px;font-size:9.5px;color:#222;-webkit-text-stroke:0.22px #222;transform:scaleX(0.937);">ALG_TRIG_AOBS_FROMPRU_NC</div>
<div class="t" style="left:856.30px;top:805.25px;line-height:10.92px;font-size:9.5px;color:#222;-webkit-text-stroke:0.22px #222;transform:scaleX(0.966);">BOOL</div>
<div class="t" style="left:926.40px;top:805.25px;line-height:10.92px;font-size:9.5px;color:#222;-webkit-text-stroke:0.22px #222;transform:scaleX(0.974);">X8724.3</div>
<div class="t" style="left:997.40px;top:805.25px;line-height:10.92px;font-size:9.5px;color:#222;-webkit-text-stroke:0.22px #222;transform:scaleX(0.862);">FALSE</div>
<div style="left:408px;top:818.7px;width:814px;height:17.6px;background:#f5f5f5"></div>
<div class="t" style="left:410.90px;top:822.85px;line-height:10.92px;font-size:9.5px;color:#222;-webkit-text-stroke:0.22px #222;transform:scaleX(0.875);">TCH_FILL_KC</div>
<div class="t" style="left:856.30px;top:822.85px;line-height:10.92px;font-size:9.5px;color:#222;-webkit-text-stroke:0.22px #222;transform:scaleX(0.966);">BOOL</div>
<div class="t" style="left:926.40px;top:822.85px;line-height:10.92px;font-size:9.5px;color:#222;-webkit-text-stroke:0.22px #222;transform:scaleX(0.974);">X8724.4</div>
<div class="t" style="left:997.40px;top:822.85px;line-height:10.92px;font-size:9.5px;color:#222;-webkit-text-stroke:0.22px #222;transform:scaleX(0.862);">FALSE</div>
<div class="t" style="left:410.90px;top:840.45px;line-height:10.92px;font-size:9.5px;color:#222;-webkit-text-stroke:0.22px #222;transform:scaleX(0.907);">MDE_RESERVE</div>
<div class="t" style="left:856.30px;top:840.45px;line-height:10.92px;font-size:9.5px;color:#222;-webkit-text-stroke:0.22px #222;transform:scaleX(0.966);">BOOL</div>
<div class="t" style="left:926.40px;top:840.45px;line-height:10.92px;font-size:9.5px;color:#222;-webkit-text-stroke:0.22px #222;transform:scaleX(0.974);">X8724.5</div>
<div class="t" style="left:997.40px;top:840.45px;line-height:10.92px;font-size:9.5px;color:#222;-webkit-text-stroke:0.22px #222;transform:scaleX(0.862);">FALSE</div>
<div style="left:408px;top:853.9000000000001px;width:814px;height:17.6px;background:#f5f5f5"></div>
<div class="t" style="left:410.90px;top:858.05px;line-height:10.92px;font-size:9.5px;color:#222;-webkit-text-stroke:0.22px #222;transform:scaleX(0.936);">TCH_NOGAS_INKC</div>
<div class="t" style="left:856.30px;top:858.05px;line-height:10.92px;font-size:9.5px;color:#222;-webkit-text-stroke:0.22px #222;transform:scaleX(0.966);">BOOL</div>
<div class="t" style="left:926.40px;top:858.05px;line-height:10.92px;font-size:9.5px;color:#222;-webkit-text-stroke:0.22px #222;transform:scaleX(0.974);">X8724.6</div>
<div class="t" style="left:997.40px;top:858.05px;line-height:10.92px;font-size:9.5px;color:#222;-webkit-text-stroke:0.22px #222;transform:scaleX(0.862);">FALSE</div>
<div style="left:1082.6px;top:818.2px;width:140.7px;height:18.2px;background:#fff;border:1px solid #7a7a7a"></div>
<div class="t" style="left:1085.00px;top:822.75px;line-height:10.92px;font-size:9.5px;color:#222;-webkit-text-stroke:0.22px #222;transform:scaleX(0.966);">TRUE</div>
<svg style="left:1203px;top:820.5px" width="13.5" height="13.5" viewBox="0 0 13.5 13.5"><circle cx="6.75" cy="6.75" r="6.3" fill="#333"/><path d="M4.5 4.5 L9 9 M9 4.5 L4.5 9" stroke="#fff" stroke-width="1.4"/></svg>
<div style="left:372px;top:875px;width:90px;height:19px;background:#f8f8f8"></div>
<div class="t" style="left:384.00px;top:880.75px;line-height:10.92px;font-size:9.5px;color:#2a2a2a;-webkit-text-stroke:0.22px #2a2a2a;transform:scaleX(1.014);">KC_A1_test</div>
<svg style="left:439.5px;top:879px" width="13" height="12" viewBox="0 0 13 12"><rect x="0" y="0" width="13" height="12" rx="2" fill="#e06a48"/><path d="M4 3.5 L9 8.5 M9 3.5 L4 8.5" stroke="#fff" stroke-width="1.4"/></svg>
<div style="left:371px;top:894px;width:869.5px;height:1px;background:#c4c4c4"></div>
<div style="left:1239px;top:873px;width:1px;height:21.5px;background:#c4c4c4"></div>
<div style="left:1243.6px;top:671px;width:436.4px;height:16.3px;background:#dadada;border:1px solid #cdcdcd"></div>
<div class="t" style="left:1247.60px;top:675.45px;line-height:10.92px;font-size:9.5px;color:#3a3a3a;-webkit-text-stroke:0.22px #3a3a3a;transform:scaleX(0.970);">Сообщения</div>
<svg style="left:1659px;top:675px" width="8" height="8"><path d="M2.5 2.5 V0.6 H7.4 V5.5 H5.5" fill="none" stroke="#333" stroke-width="1.1"/><path d="M2.5 1.3 H7.4" stroke="#333" stroke-width="1.4"/><rect x="0.6" y="2.8" width="4.9" height="4.6" fill="none" stroke="#333" stroke-width="1.2"/><path d="M0.6 3.5 H5.5" stroke="#333" stroke-width="1.4"/></svg>
<div style="left:1245.6px;top:689.2px;width:434.4px;height:185.5px;background:#fff;border-bottom:1px solid #b8b8b8"></div>
<div class="t" style="left:1249.50px;top:696.25px;line-height:10.92px;font-size:9.5px;color:#222;-webkit-text-stroke:0.22px #222;transform:scaleX(1.028);">29.02.2024 18:53:43:   Открыт проект:   D:/_Current_TASK_/_AltPRO/_prg3_Lec/MCU_altpro/</div>
<div class="t" style="left:1249.50px;top:706.95px;line-height:10.92px;font-size:9.5px;color:#222;-webkit-text-stroke:0.22px #222;transform:scaleX(1.034);">altproprj.xml</div>
<div style="left:1246px;top:875px;width:88.5px;height:19.5px;background:#f8f8f8"></div>
<div style="left:1334.5px;top:877px;width:1px;height:15px;background:#e4e4e4"></div>
<div style="left:1383px;top:877px;width:1px;height:15px;background:#e4e4e4"></div>
<div class="t" style="left:1252.80px;top:880.15px;line-height:10.92px;font-size:9.5px;color:#2a2a2a;-webkit-text-stroke:0.22px #2a2a2a;transform:scaleX(0.980);">Информация (1)</div>
<div class="t" style="left:1345.20px;top:880.15px;line-height:10.92px;font-size:9.5px;color:#2a2a2a;-webkit-text-stroke:0.22px #2a2a2a;transform:scaleX(1.018);">Поиск</div>
<div class="t" style="left:1392.00px;top:880.15px;line-height:10.92px;font-size:9.5px;color:#2a2a2a;-webkit-text-stroke:0.22px #2a2a2a;transform:scaleX(1.033);">Сборка</div>
</div></body></html>
